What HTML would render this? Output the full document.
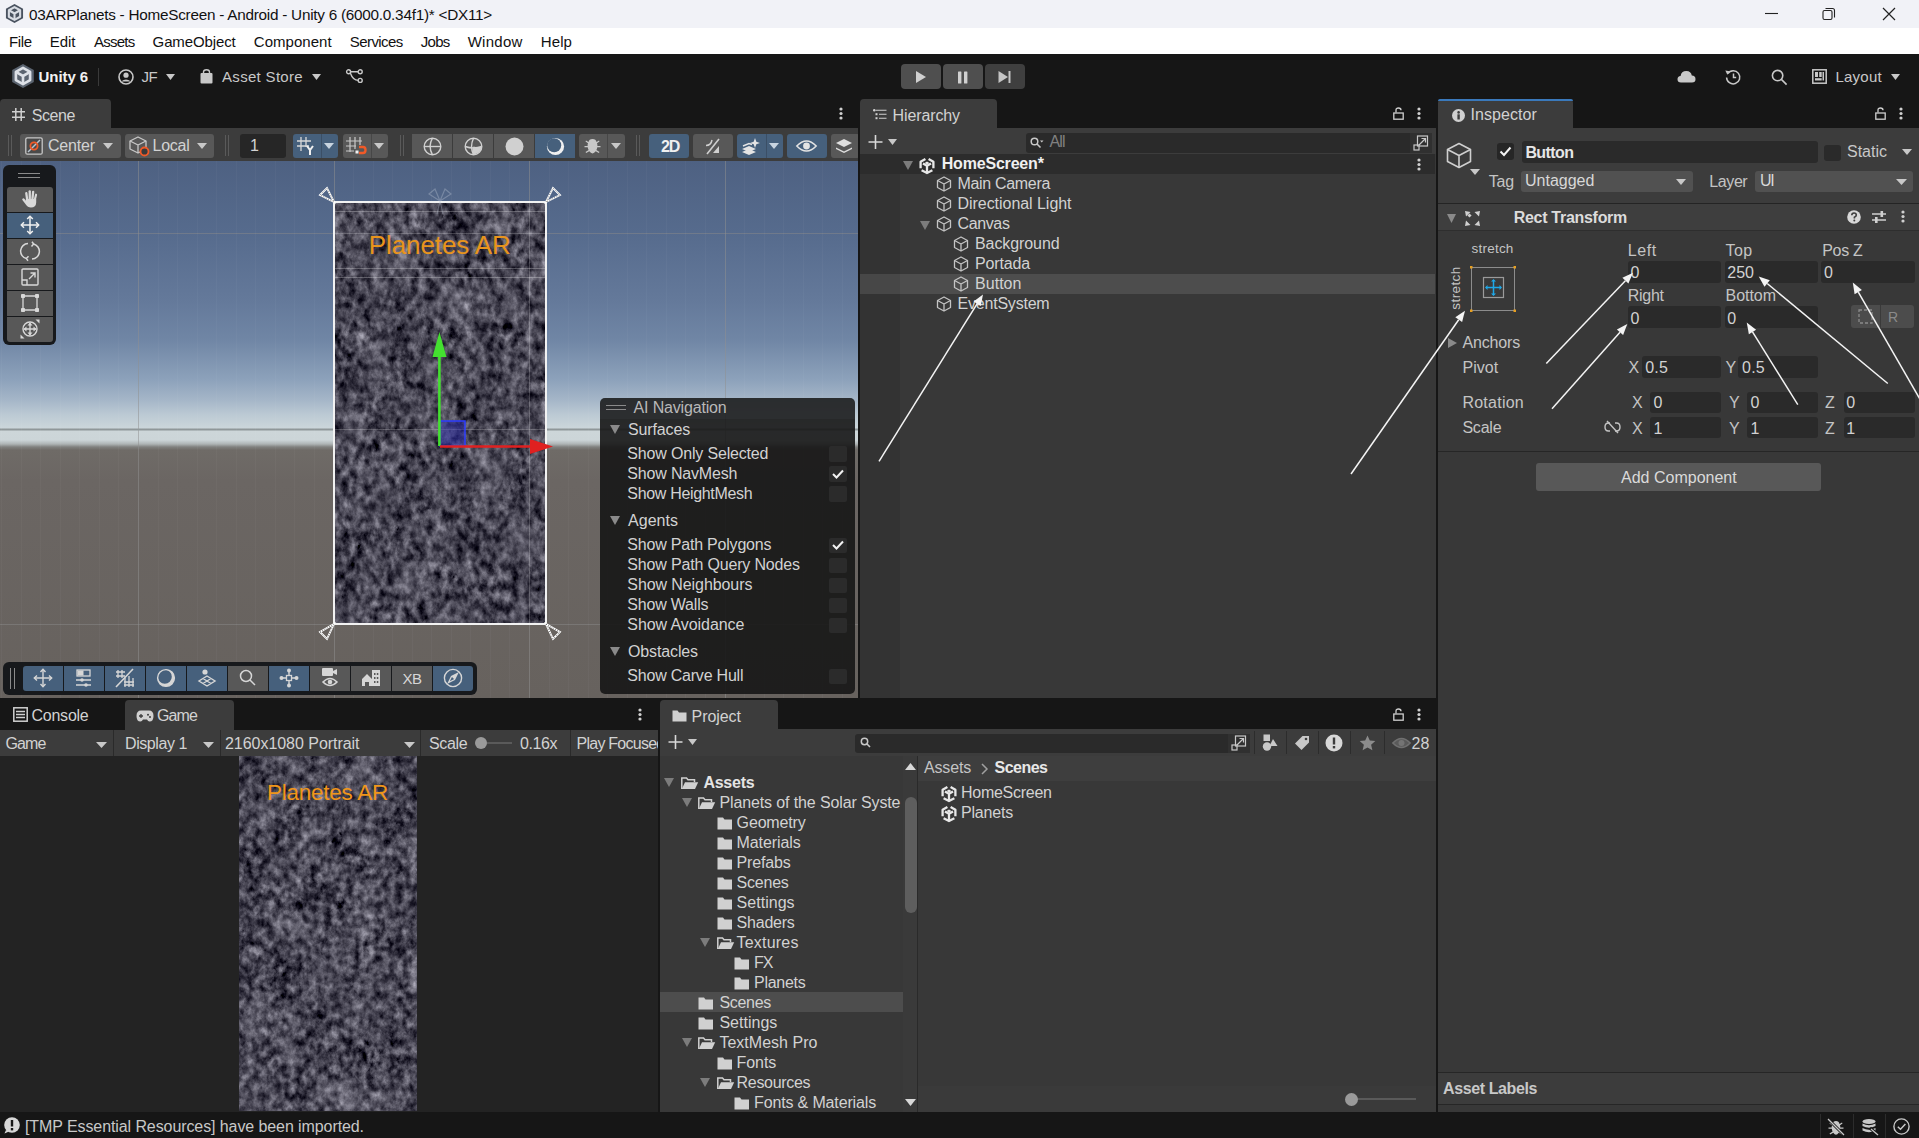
<!DOCTYPE html>
<html><head><meta charset="utf-8">
<style>
*{box-sizing:border-box;margin:0;padding:0}
html,body{width:1919px;height:1138px;overflow:hidden;background:#161616;font-family:"Liberation Sans",sans-serif;position:relative}
.a{position:absolute}
.t{position:absolute;white-space:pre;line-height:1}
svg.a{overflow:visible}
</style></head><body>
<div class="a" style="left:0px;top:0px;width:1919px;height:28px;background:#f1f2f7;"></div>
<div class="a" style="left:0px;top:28px;width:1919px;height:26px;background:#ffffff;"></div>
<div class="a" style="left:0px;top:54px;width:1919px;height:45px;background:#161616;"></div>
<svg class="a" style="left:5px;top:4px;" width="19" height="19" viewBox="0 0 19 19"><path d="M9.5 0 L18.05 4.75 L18.05 14.25 L9.5 19 L0.9500000000000001 14.25 L0.9500000000000001 4.75 Z" fill="#4a5360"/><g fill="none" stroke="#d8dce3" stroke-width="2.09" stroke-linejoin="round"><path d="M9.5 3.039999999999999 L15.1202 6.27 L15.1202 12.73 L9.5 15.96 L3.8797999999999995 12.73 L3.8797999999999995 6.27 Z"/><path d="M9.5 9.5 L9.5 15.96 M9.5 9.5 L15.1202 6.27 M9.5 9.5 L3.8797999999999995 6.27"/></g></svg>
<div class="t" style="left:29.00px;top:7.05px;font-size:15.3px;color:#111111;letter-spacing:-0.247px;">03ARPlanets - HomeScreen - Android - Unity 6 (6000.0.34f1)* &lt;DX11&gt;</div>
<svg class="a" style="left:1765px;top:8px;" width="14" height="12" viewBox="0 0 14 12"><path d="M0 5.5 H13" stroke="#222" stroke-width="1.1"/></svg>
<svg class="a" style="left:1822px;top:7px;" width="14" height="14" viewBox="0 0 14 14"><rect x="1" y="3.5" width="9" height="9" rx="1.5" fill="none" stroke="#222" stroke-width="1.1"/><path d="M3.5 1.5 H10.5 Q12.5 1.5 12.5 3.5 V10.5" fill="none" stroke="#222" stroke-width="1.1"/></svg>
<svg class="a" style="left:1882px;top:7px;" width="14" height="14" viewBox="0 0 14 14"><path d="M1 1 L13 13 M13 1 L1 13" stroke="#222" stroke-width="1.2"/></svg>
<div class="t" style="left:9.00px;top:34.30px;font-size:15px;color:#111111;letter-spacing:-0.368px;">File</div>
<div class="t" style="left:49.80px;top:34.30px;font-size:15px;color:#111111;letter-spacing:-0.040px;">Edit</div>
<div class="t" style="left:94.00px;top:34.30px;font-size:15px;color:#111111;letter-spacing:-0.769px;">Assets</div>
<div class="t" style="left:152.60px;top:34.30px;font-size:15px;color:#111111;letter-spacing:-0.120px;">GameObject</div>
<div class="t" style="left:253.80px;top:34.30px;font-size:15px;color:#111111;letter-spacing:0.037px;">Component</div>
<div class="t" style="left:349.80px;top:34.30px;font-size:15px;color:#111111;letter-spacing:-0.579px;">Services</div>
<div class="t" style="left:420.80px;top:34.30px;font-size:15px;color:#111111;letter-spacing:-0.747px;">Jobs</div>
<div class="t" style="left:467.70px;top:34.30px;font-size:15px;color:#111111;letter-spacing:0.273px;">Window</div>
<div class="t" style="left:540.80px;top:34.30px;font-size:15px;color:#111111;letter-spacing:0.085px;">Help</div>
<svg class="a" style="left:11px;top:64px;" width="24" height="24" viewBox="0 0 24 24"><path d="M12.0 0 L22.799999999999997 6.0 L22.799999999999997 18.0 L12.0 24 L1.2000000000000002 18.0 L1.2000000000000002 6.0 Z" fill="#5b6470"/><g fill="none" stroke="#dde1e7" stroke-width="2.64" stroke-linejoin="round"><path d="M12.0 3.84 L19.0992 7.92 L19.0992 16.08 L12.0 20.16 L4.9008 16.08 L4.9008 7.92 Z"/><path d="M12.0 12.0 L12.0 20.16 M12.0 12.0 L19.0992 7.92 M12.0 12.0 L4.9008 7.92"/></g></svg>
<div class="t" style="left:38.60px;top:69.30px;font-size:15px;color:#f2f2f2;letter-spacing:-0.074px;font-weight:700;">Unity 6</div>
<div class="a" style="left:98px;top:68px;width:1px;height:18px;background:#3a3a3a;"></div>
<svg class="a" style="left:118px;top:69px;" width="16" height="16" viewBox="0 0 16 16"><circle cx="8" cy="8" r="7" fill="none" stroke="#c8c8c8" stroke-width="1.6"/><circle cx="8" cy="6.2" r="2.6" fill="#c8c8c8"/><path d="M3.2 12.6 Q8 8.4 12.8 12.6" fill="#c8c8c8"/></svg>
<div class="t" style="left:141.60px;top:69.30px;font-size:15px;color:#c8c8c8;letter-spacing:-0.586px;">JF</div>
<svg class="a" style="left:166px;top:74px;" width="9" height="6" viewBox="0 0 9 6"><path d="M0 0 H9 L4.5 6 Z" fill="#c8c8c8"/></svg>
<svg class="a" style="left:199.5px;top:69px;" width="13" height="15" viewBox="0 0 13 15"><path d="M3.5 4.5 V3 Q3.5 0.8 6.5 0.8 Q9.5 0.8 9.5 3 V4.5" fill="none" stroke="#c8c8c8" stroke-width="1.4"/><rect x="0.5" y="4" width="12" height="10.5" rx="1" fill="#c8c8c8"/></svg>
<div class="t" style="left:222.00px;top:69.30px;font-size:15px;color:#c8c8c8;letter-spacing:0.314px;">Asset Store</div>
<svg class="a" style="left:312px;top:74px;" width="9" height="6" viewBox="0 0 9 6"><path d="M0 0 H9 L4.5 6 Z" fill="#c8c8c8"/></svg>
<svg class="a" style="left:346px;top:69px;" width="17" height="14" viewBox="0 0 17 14"><g fill="none" stroke="#c8c8c8" stroke-width="1.4"><circle cx="2.6" cy="2.8" r="2"/><circle cx="14.2" cy="2.8" r="2"/><circle cx="14.2" cy="11.4" r="2"/><path d="M4.6 2.8 H12.2 M4.3 4 Q7 11.4 12.2 11.4"/></g></svg>
<div class="a" style="left:901px;top:64px;width:40px;height:25px;background:#4f4f4f;border-radius:4px"></div>
<div class="a" style="left:943px;top:64px;width:40px;height:25px;background:#4f4f4f;border-radius:4px"></div>
<div class="a" style="left:985px;top:64px;width:40px;height:25px;background:#3f3f3f;border-radius:4px"></div>
<svg class="a" style="left:915px;top:70px;" width="12" height="14" viewBox="0 0 12 14"><path d="M1 1 L11 7 L1 13 Z" fill="#d0d0d0"/></svg>
<svg class="a" style="left:957px;top:71px;" width="12" height="13" viewBox="0 0 12 13"><rect x="1" y="0.5" width="3.4" height="12" rx="0.6" fill="#d0d0d0"/><rect x="7" y="0.5" width="3.4" height="12" rx="0.6" fill="#d0d0d0"/></svg>
<svg class="a" style="left:998px;top:70px;" width="14" height="14" viewBox="0 0 14 14"><path d="M0.5 1 L10 7 L0.5 13 Z" fill="#c4c4c4"/><rect x="10.5" y="1" width="2" height="12" fill="#c4c4c4"/></svg>
<svg class="a" style="left:1677px;top:70px;" width="19" height="13" viewBox="0 0 19 13"><path d="M4 12.5 Q0.5 12.5 0.5 9.3 Q0.5 6.3 3.6 6 Q4.2 1 9.4 1 Q14 1 14.8 5.6 Q18.5 5.8 18.5 9.2 Q18.5 12.5 15 12.5 Z" fill="#c8c8c8"/></svg>
<svg class="a" style="left:1725px;top:69px;" width="17" height="16" viewBox="0 0 17 16"><g fill="none" stroke="#c8c8c8" stroke-width="1.5"><path d="M2.8 4.5 A6.6 6.6 0 1 1 1.6 8.4"/><path d="M8.5 4.6 V8.6 H11.2"/></g><path d="M0.3 1.6 L4.6 2.2 L2.4 5.8 Z" fill="#c8c8c8"/></svg>
<svg class="a" style="left:1771px;top:69px;" width="17" height="17" viewBox="0 0 17 17"><g fill="none" stroke="#c8c8c8" stroke-width="1.6"><circle cx="6.6" cy="6.6" r="5.2"/><path d="M10.4 10.4 L15.6 15.6"/></g></svg>
<svg class="a" style="left:1812px;top:69px;" width="15" height="15" viewBox="0 0 15 15"><g fill="none" stroke="#c8c8c8" stroke-width="1.5"><rect x="0.8" y="0.8" width="13.4" height="13.4"/></g><rect x="3" y="3" width="3" height="5" fill="#c8c8c8"/><rect x="7.2" y="3" width="2.5" height="5" fill="#c8c8c8"/><rect x="10.5" y="3" width="1.5" height="8.5" fill="#c8c8c8"/><rect x="3" y="9.2" width="6.7" height="2.3" fill="#c8c8c8"/></svg>
<div class="t" style="left:1835.40px;top:69.30px;font-size:15px;color:#c8c8c8;letter-spacing:0.259px;">Layout</div>
<svg class="a" style="left:1891px;top:74px;" width="9" height="6" viewBox="0 0 9 6"><path d="M0 0 H9 L4.5 6 Z" fill="#c8c8c8"/></svg>
<div class="a" style="left:0px;top:99px;width:111px;height:29px;background:#3c3c3c;border-radius:4px 4px 0 0"></div>
<svg class="a" style="left:12px;top:108px;" width="13" height="13" viewBox="0 0 13 13"><g stroke="#d0d0d0" stroke-width="1.5"><path d="M3.8 0 V13 M9.2 0 V13 M0 3.8 H13 M0 9.2 H13"/></g></svg>
<div class="t" style="left:31.70px;top:107.56px;font-size:16px;color:#d2d2d2;letter-spacing:-0.415px;">Scene</div>
<svg class="a" style="left:839px;top:107px;" width="4" height="13" viewBox="0 0 4 13"><circle cx="2" cy="2" r="1.6" fill="#d0d0d0"/><circle cx="2" cy="6.5" r="1.6" fill="#d0d0d0"/><circle cx="2" cy="11" r="1.6" fill="#d0d0d0"/></svg>
<div class="a" style="left:0px;top:128px;width:858px;height:33px;background:#3c3c3c;"></div>
<div class="a" style="left:8px;top:135px;width:1px;height:21px;background:#5a5a5a;"></div>
<div class="a" style="left:11px;top:135px;width:1px;height:21px;background:#5a5a5a;"></div>
<div class="a" style="left:225px;top:135px;width:1px;height:21px;background:#5a5a5a;"></div>
<div class="a" style="left:228px;top:135px;width:1px;height:21px;background:#5a5a5a;"></div>
<div class="a" style="left:400px;top:135px;width:1px;height:21px;background:#5a5a5a;"></div>
<div class="a" style="left:403px;top:135px;width:1px;height:21px;background:#5a5a5a;"></div>
<div class="a" style="left:636px;top:135px;width:1px;height:21px;background:#5a5a5a;"></div>
<div class="a" style="left:639px;top:135px;width:1px;height:21px;background:#5a5a5a;"></div>
<div class="a" style="left:20px;top:134px;width:101px;height:24px;background:#585858;border-radius:3px"></div>
<svg class="a" style="left:25px;top:137px;" width="18" height="18" viewBox="0 0 18 18"><rect x="0.8" y="0.8" width="16.4" height="16.4" rx="1.5" fill="#4a4a4a" stroke="#c8c8c8" stroke-width="1.3"/><path d="M3 15 L15 3" stroke="#b8c4d0" stroke-width="1.4"/><circle cx="9" cy="9" r="3.6" fill="none" stroke="#f05a28" stroke-width="1.8"/></svg>
<div class="t" style="left:47.90px;top:138.26px;font-size:16px;color:#d2d2d2;letter-spacing:-0.172px;">Center</div>
<svg class="a" style="left:103px;top:143px;" width="10" height="6" viewBox="0 0 10 6"><path d="M0 0 H10 L5.0 6 Z" fill="#c8c8c8"/></svg>
<div class="a" style="left:125px;top:134px;width:89px;height:24px;background:#585858;border-radius:3px"></div>
<svg class="a" style="left:129px;top:136px;" width="21" height="21" viewBox="0 0 21 21"><g fill="none" stroke="#c8c8c8" stroke-width="1.3" stroke-linejoin="round"><path d="M9 1 L17 5 L17 13 L9 17 L1 13 L1 5 Z"/><path d="M1 5 L9 9 L17 5 M9 9 V17"/></g><circle cx="15.5" cy="15.5" r="4" fill="#3a3a3a" stroke="#f05a28" stroke-width="1.8"/></svg>
<div class="t" style="left:152.50px;top:138.26px;font-size:16px;color:#d2d2d2;letter-spacing:-0.250px;">Local</div>
<svg class="a" style="left:197px;top:143px;" width="10" height="6" viewBox="0 0 10 6"><path d="M0 0 H10 L5.0 6 Z" fill="#c8c8c8"/></svg>
<div class="a" style="left:240px;top:134px;width:46px;height:24px;background:#262626;border-radius:3px"></div>
<div class="t" style="left:250.00px;top:138.26px;font-size:16px;color:#d2d2d2;letter-spacing:0.000px;">1</div>
<div class="a" style="left:292.6px;top:134px;width:45.39999999999998px;height:24px;background:#46607c;border-radius:3px"></div>
<div class="a" style="left:320.6px;top:134px;width:1px;height:24px;background:#3b4f66;"></div>
<svg class="a" style="left:297px;top:137px;" width="19" height="19" viewBox="0 0 19 19"><g stroke="#d8d8d8" stroke-width="1.3"><path d="M4 0 V14 M9 0 V10 M0 4 H14 M0 9 H12"/></g><path d="M10 9 L13 13 L16 9 M13 13 V18" fill="none" stroke="#f0f0f0" stroke-width="2"/></svg>
<svg class="a" style="left:324px;top:143px;" width="10" height="6" viewBox="0 0 10 6"><path d="M0 0 H10 L5.0 6 Z" fill="#c8d4e0"/></svg>
<div class="a" style="left:342.6px;top:134px;width:45.39999999999998px;height:24px;background:#585858;border-radius:3px"></div>
<div class="a" style="left:370.6px;top:134px;width:1px;height:24px;background:#474747;"></div>
<svg class="a" style="left:346px;top:137px;" width="20" height="19" viewBox="0 0 20 19"><g stroke="#c8c8c8" stroke-width="1.2"><path d="M4 0 V15 M9 0 V12 M14 0 V8 M0 4 H16 M0 9 H10 M0 14 H8"/></g><path d="M13 10 H17 Q19.5 10 19.5 13 Q19.5 16 17 16 H13" fill="none" stroke="#f05a28" stroke-width="2.4"/><rect x="9.5" y="13.5" width="3" height="3" fill="#f0f0f0"/></svg>
<svg class="a" style="left:374px;top:143px;" width="10" height="6" viewBox="0 0 10 6"><path d="M0 0 H10 L5.0 6 Z" fill="#c8c8c8"/></svg>
<div class="a" style="left:412px;top:134px;width:40px;height:24px;background:#585858;border-radius:0px"></div>
<div class="a" style="left:453px;top:134px;width:40px;height:24px;background:#585858;border-radius:0px"></div>
<div class="a" style="left:494px;top:134px;width:40px;height:24px;background:#585858;border-radius:0px"></div>
<div class="a" style="left:535px;top:134px;width:40px;height:24px;background:#46607c;border-radius:0px"></div>
<div class="a" style="left:412px;top:134px;width:3px;height:24px;background:#585858;border-radius:3px 0 0 3px"></div>
<svg class="a" style="left:423px;top:137px;" width="19" height="19" viewBox="0 0 19 19"><g fill="none" stroke="#d0d0d0" stroke-width="1.4"><circle cx="9.5" cy="9.5" r="8.3"/><path d="M1.2 9.5 H17.8"/><path d="M9.5 1.2 Q4.6 9.5 9.5 17.8"/></g></svg>
<svg class="a" style="left:464px;top:137px;" width="19" height="19" viewBox="0 0 19 19"><g fill="none" stroke="#d0d0d0" stroke-width="1.4"><circle cx="9.5" cy="9.5" r="8.3"/><path d="M1.2 9.5 Q9.5 12.5 17.8 9.5"/><path d="M9.5 1.2 Q5.6 9.5 9.5 17.8"/></g><path d="M9.5 9.5 Q14 10.6 17.8 9.5 Q17 16 9.5 17.8 Q7 14 9.5 9.5 Z" fill="#d0d0d0"/></svg>
<svg class="a" style="left:505px;top:137px;" width="19" height="19" viewBox="0 0 19 19"><circle cx="9.5" cy="9.5" r="9" fill="#d0d0d0"/></svg>
<svg class="a" style="left:546px;top:137px;" width="19" height="19" viewBox="0 0 19 19"><circle cx="9.5" cy="9.5" r="8.6" fill="#f0f0f0"/><circle cx="8.2" cy="8.2" r="7" fill="#46607c"/></svg>
<div class="a" style="left:578.6px;top:134px;width:46.39999999999998px;height:24px;background:#585858;border-radius:3px"></div>
<div class="a" style="left:607px;top:134px;width:1px;height:24px;background:#474747;"></div>
<svg class="a" style="left:583px;top:137px;" width="19" height="18" viewBox="0 0 19 18"><path d="M9.5 2 Q6 2 5.5 5 L3 3.5 L2.5 4.5 L5 6.3 Q4.5 7.5 4.6 9 L1.5 9 V10.2 L4.7 10.2 Q5 12 5.6 13 L2.5 15 L3.2 16 L6.3 14.2 Q7.8 16.2 9.5 16.4 Q11.2 16.2 12.7 14.2 L15.8 16 L16.5 15 L13.4 13 Q14 12 14.3 10.2 L17.5 10.2 V9 L14.4 9 Q14.5 7.5 14 6.3 L16.5 4.5 L16 3.5 L13.5 5 Q13 2 9.5 2 Z" fill="#c8c8c8"/></svg>
<svg class="a" style="left:611px;top:143px;" width="10" height="6" viewBox="0 0 10 6"><path d="M0 0 H10 L5.0 6 Z" fill="#c8c8c8"/></svg>
<div class="a" style="left:649px;top:134px;width:40px;height:24px;background:#46607c;border-radius:3px"></div>
<div class="t" style="left:661.00px;top:138.56px;font-size:16px;color:#f0f0f0;letter-spacing:-1.227px;font-weight:700;">2D</div>
<div class="a" style="left:693px;top:134px;width:40px;height:24px;background:#585858;border-radius:3px"></div>
<svg class="a" style="left:704px;top:137px;" width="18" height="19" viewBox="0 0 18 19"><path d="M3 17 L15 2" stroke="#d0d0d0" stroke-width="1.6"/><path d="M2 8.5 Q7 8.5 8 3" fill="none" stroke="#d0d0d0" stroke-width="1.5"/><path d="M9 16 L15 9 V16 Z" fill="#d0d0d0"/></svg>
<div class="a" style="left:737px;top:134px;width:46px;height:24px;background:#46607c;border-radius:3px"></div>
<div class="a" style="left:765.7px;top:134px;width:1px;height:24px;background:#3b4f66;"></div>
<svg class="a" style="left:741px;top:137px;" width="20" height="19" viewBox="0 0 20 19"><path d="M1 12 L8 9 L15 12 L8 15 Z M1 15 L8 12 L15 15 L8 18 Z" fill="#e4e4e4"/><path d="M2 9 L8 6.5 L11 7.5" fill="none" stroke="#e4e4e4" stroke-width="1.5"/><path d="M14 1 L15.3 4.7 L19 6 L15.3 7.3 L14 11 L12.7 7.3 L9 6 L12.7 4.7 Z" fill="#e4e4e4"/></svg>
<svg class="a" style="left:769px;top:143px;" width="10" height="6" viewBox="0 0 10 6"><path d="M0 0 H10 L5.0 6 Z" fill="#c8d4e0"/></svg>
<div class="a" style="left:786.6px;top:134px;width:40.39999999999998px;height:24px;background:#46607c;border-radius:3px"></div>
<svg class="a" style="left:796px;top:139px;" width="21" height="14" viewBox="0 0 21 14"><path d="M0.8 7 Q10.5 -3 20.2 7 Q10.5 17 0.8 7 Z" fill="none" stroke="#e4e4e4" stroke-width="1.5"/><circle cx="10.5" cy="7" r="3.4" fill="#e4e4e4"/></svg>
<div class="a" style="left:831px;top:134px;width:29px;height:24px;background:#585858;border-radius:3px"></div>
<svg class="a" style="left:835px;top:138px;" width="18" height="16" viewBox="0 0 18 16"><path d="M9 1 L17 5 L9 9 L1 5 Z M1 9.5 L9 13.5 L17 9.5 L17 11 L9 15 L1 11 Z" fill="#e0e0e0"/></svg>
<div class="a" style="left:858px;top:128px;width:2px;height:570px;background:#161616;"></div>
<div class="a" style="left:0;top:161px;width:858px;height:537px;overflow:hidden;background:linear-gradient(to bottom,#4e6182 0px,#566b8d 72px,#64799a 139px,#7086a5 179px,#8da2bb 219px,#a5b6c8 239px,#bccad4 254px,#cad5da 266px,#cdd6d9 270px,#ccd5d8 279px,#aeb4b5 283px,#80807e 286px,#6f6b67 289px,#6b6663 320px,#67625e 537px)">
<svg class="a" style="left:0;top:0" width="858" height="537"><g stroke="#8a8a8a" stroke-opacity="0.5" stroke-width="1"><path d="M138.5 0 V537 M529.5 0 V537 M725.5 0 V537 M334.5 0 V537"/><path d="M0 72.5 H858 M0 463.5 H858"/></g><path d="M0 268.5 H858" stroke="#8f9799" stroke-width="2"/><g stroke="#ffffff" stroke-opacity="0.03" stroke-width="1"><path d="M1.5 0 V537"/><path d="M21.5 0 V537"/><path d="M40.5 0 V537"/><path d="M60.5 0 V537"/><path d="M79.5 0 V537"/><path d="M99.5 0 V537"/><path d="M118.5 0 V537"/><path d="M138.5 0 V537"/><path d="M158.5 0 V537"/><path d="M177.5 0 V537"/><path d="M197.5 0 V537"/><path d="M216.5 0 V537"/><path d="M236.5 0 V537"/><path d="M255.5 0 V537"/><path d="M275.5 0 V537"/><path d="M294.5 0 V537"/><path d="M314.5 0 V537"/><path d="M334.5 0 V537"/><path d="M353.5 0 V537"/><path d="M373.5 0 V537"/><path d="M392.5 0 V537"/><path d="M412.5 0 V537"/><path d="M431.5 0 V537"/><path d="M451.5 0 V537"/><path d="M470.5 0 V537"/><path d="M490.5 0 V537"/><path d="M509.5 0 V537"/><path d="M529.5 0 V537"/><path d="M549.5 0 V537"/><path d="M568.5 0 V537"/><path d="M588.5 0 V537"/><path d="M607.5 0 V537"/><path d="M627.5 0 V537"/><path d="M646.5 0 V537"/><path d="M666.5 0 V537"/><path d="M685.5 0 V537"/><path d="M705.5 0 V537"/><path d="M725.5 0 V537"/><path d="M744.5 0 V537"/><path d="M764.5 0 V537"/><path d="M783.5 0 V537"/><path d="M803.5 0 V537"/><path d="M822.5 0 V537"/><path d="M842.5 0 V537"/></g></svg>
</div>
<svg class="a" style="left:334px;top:202px;" width="212" height="422" viewBox="0 0 212 422"><defs><filter id="gr1" x="0" y="0" width="100%" height="100%" color-interpolation-filters="sRGB"><feTurbulence type="fractalNoise" baseFrequency="0.13 0.1" numOctaves="4" seed="7" result="hi"/><feTurbulence type="fractalNoise" baseFrequency="0.035 0.025" numOctaves="2" seed="12" result="lo"/><feComposite in="hi" in2="lo" operator="arithmetic" k1="0" k2="0.85" k3="0.35" k4="-0.1"/><feColorMatrix type="matrix" values="0.85 0 0 0 -0.05  0.85 0 0 0 -0.058  0.85 0 0 0 -0.005  0 0 0 0 1"/></filter></defs><rect width="212" height="422" fill="#5a5a64" filter="url(#gr1)"/></svg>
<svg class="a" style="left:334px;top:202px;" width="212" height="422" viewBox="0 0 212 422"><g stroke="#ffffff" stroke-opacity="0.25" stroke-width="1"><path d="M0 9.5 H212 M0 66.5 H212 M0 75.5 H212"/></g><g stroke="#ffffff" stroke-opacity="0.2" stroke-width="1"><path d="M195.5 0 V422 M0 31.5 H212 M0 227.5 H212"/></g></svg>
<div class="t" style="left:368.75px;top:232.39px;font-size:26px;color:#e8941c;letter-spacing:-0.099px;">Planetes AR</div>
<svg class="a" style="left:333px;top:201px;" width="214" height="424" viewBox="0 0 214 424"><rect x="1" y="1" width="212" height="422" fill="none" stroke="#f2f2f2" stroke-width="2"/></svg>
<svg class="a" style="left:0px;top:0px;" width="1" height="1" viewBox="0 0 1 1"><path d="M320 195 L327 188 L334 202 Z" fill="none" stroke="#ffffff" stroke-width="1.8"/><path d="M320 195 L327 188 L334 202 Z" fill="none" stroke="#101010" stroke-opacity="0.7" stroke-width="0.8" stroke-dasharray="1 1.6"/></svg>
<svg class="a" style="left:0px;top:0px;" width="1" height="1" viewBox="0 0 1 1"><path d="M546 202 L553 188 L560 195 Z" fill="none" stroke="#ffffff" stroke-width="1.8"/><path d="M546 202 L553 188 L560 195 Z" fill="none" stroke="#101010" stroke-opacity="0.7" stroke-width="0.8" stroke-dasharray="1 1.6"/></svg>
<svg class="a" style="left:0px;top:0px;" width="1" height="1" viewBox="0 0 1 1"><path d="M320 632 L327 639 L334 624 Z" fill="none" stroke="#ffffff" stroke-width="1.8"/><path d="M320 632 L327 639 L334 624 Z" fill="none" stroke="#101010" stroke-opacity="0.7" stroke-width="0.8" stroke-dasharray="1 1.6"/></svg>
<svg class="a" style="left:0px;top:0px;" width="1" height="1" viewBox="0 0 1 1"><path d="M546 624 L553 639 L560 632 Z" fill="none" stroke="#ffffff" stroke-width="1.8"/><path d="M546 624 L553 639 L560 632 Z" fill="none" stroke="#101010" stroke-opacity="0.7" stroke-width="0.8" stroke-dasharray="1 1.6"/></svg>
<svg class="a" style="left:425px;top:186px;" width="30" height="30" viewBox="0 0 30 30"><g fill="none" stroke="#c0c8d8" stroke-opacity="0.35" stroke-width="1.2"><path d="M15 15 L4 8 L10 3 Z M15 15 L26 8 L20 3 Z M15 15 L12 28 M15 15 L18 28"/></g></svg>
<svg class="a" style="left:430px;top:330px;" width="125" height="126" viewBox="0 0 125 126"><rect x="10" y="91" width="25" height="25" fill="#3030c0" fill-opacity="0.45" stroke="#2c3cff" stroke-width="1.5"/><path d="M9.4 26 V116" stroke="#44e030" stroke-width="2.6"/><path d="M2.5 27 L9.4 2 L16.5 27 Z" fill="#44e030"/><path d="M10 116.5 H101" stroke="#e02020" stroke-width="2.6"/><path d="M100 109 L123 116.5 L100 124 Z" fill="#e02020"/></svg>
<div class="a" style="left:3px;top:165px;width:53px;height:180px;background:#17191c;border-radius:6px"></div>
<div class="a" style="left:18px;top:173px;width:22px;height:1.3px;background:#8a8a8a;"></div>
<div class="a" style="left:18px;top:177px;width:22px;height:1.3px;background:#8a8a8a;"></div>
<div class="a" style="left:7px;top:187px;width:46px;height:25px;background:#585858;border-radius:3px 3px 0 0"></div>
<div class="a" style="left:7px;top:213px;width:46px;height:25px;background:#46607c;"></div>
<div class="a" style="left:7px;top:239px;width:46px;height:25px;background:#585858;"></div>
<div class="a" style="left:7px;top:265px;width:46px;height:25px;background:#585858;"></div>
<div class="a" style="left:7px;top:291px;width:46px;height:25px;background:#585858;"></div>
<div class="a" style="left:7px;top:317px;width:46px;height:25px;background:#585858;border-radius:0 0 3px 3px"></div>
<svg class="a" style="left:20px;top:189px;" width="20" height="20" viewBox="0 0 20 20"><g fill="#d8d8d8"><rect x="5.6" y="3" width="2.3" height="9" rx="1.15" transform="rotate(-8 6.7 7.5)"/><rect x="8.6" y="1.2" width="2.3" height="10" rx="1.15"/><rect x="11.6" y="1.8" width="2.3" height="10" rx="1.15" transform="rotate(6 12.7 6.8)"/><rect x="14.3" y="4.5" width="2.1" height="8" rx="1.05" transform="rotate(14 15.3 8.5)"/><path d="M5.8 10 H16.2 V13.5 Q16 18.6 11 18.6 Q7.6 18.6 5.8 15.6 L2.4 11 Q1.8 9.9 2.8 9.4 Q3.8 8.9 4.6 10 L6 11.8 Z"/></g></svg>
<svg class="a" style="left:20px;top:215px;" width="20" height="20" viewBox="0 0 20 20"><g fill="none" stroke="#f0f0f0" stroke-width="1.5"><path d="M10 1.5 V18.5 M1.5 10 H18.5"/><path d="M7.2 4 L10 1.3 L12.8 4 M7.2 16 L10 18.7 L12.8 16 M4 7.2 L1.3 10 L4 12.8 M16 7.2 L18.7 10 L16 12.8"/></g></svg>
<svg class="a" style="left:20px;top:241px;" width="20" height="21" viewBox="0 0 20 21"><g fill="none" stroke="#d8d8d8" stroke-width="1.5"><path d="M8 2.6 A7.6 7.6 0 0 0 6.5 17.6"/><path d="M12 18 A7.6 7.6 0 0 0 13.5 3"/><path d="M12 0.8 L13.6 3 L11.5 5.4 M8 19.8 L6.4 17.6 L8.5 15.2"/></g></svg>
<svg class="a" style="left:21px;top:267px;" width="18" height="20" viewBox="0 0 18 20"><g fill="none" stroke="#d8d8d8" stroke-width="1.4"><rect x="1" y="2" width="16" height="16" rx="1"/><path d="M1 13 H6 V18"/><path d="M8 12 L14 6 M9.5 6 H14 V10.5"/></g></svg>
<svg class="a" style="left:20px;top:293px;" width="20" height="20" viewBox="0 0 20 20"><g fill="none" stroke="#d8d8d8" stroke-width="1.3"><path d="M4 3 H16 M4 17 H16 M3 4 V16 M17 4 V16"/></g><g fill="#d8d8d8"><rect x="1" y="1" width="4" height="4" rx="0.8"/><rect x="15" y="1" width="4" height="4" rx="0.8"/><rect x="1" y="15" width="4" height="4" rx="0.8"/><rect x="15" y="15" width="4" height="4" rx="0.8"/></g></svg>
<svg class="a" style="left:20px;top:319px;" width="20" height="20" viewBox="0 0 20 20"><g fill="none" stroke="#d8d8d8" stroke-width="1.4"><circle cx="10" cy="10" r="7"/><path d="M10 4 V16 M4 10 H16"/></g><g fill="#d8d8d8"><path d="M7.5 6.5 L10 3.5 L12.5 6.5 Z M7.5 13.5 L10 16.5 L12.5 13.5 Z M6.5 7.5 L3.5 10 L6.5 12.5 Z M13.5 7.5 L16.5 10 L13.5 12.5 Z"/><path d="M15.5 0.5 H19.5 V4.5 Z M0.5 19.5 V15.5 L4.5 19.5 Z"/></g></svg>
<div class="a" style="left:3px;top:662px;width:474px;height:33px;background:#17191c;border-radius:6px"></div>
<div class="a" style="left:10px;top:668px;width:1.3px;height:21px;background:#8a8a8a;"></div>
<div class="a" style="left:13.5px;top:668px;width:1.3px;height:21px;background:#8a8a8a;"></div>
<div class="a" style="left:23px;top:666px;width:40px;height:25px;background:#46607c;border-radius:3px 0 0 3px"></div>
<div class="a" style="left:64px;top:666px;width:40px;height:25px;background:#46607c;"></div>
<div class="a" style="left:105px;top:666px;width:40px;height:25px;background:#46607c;"></div>
<div class="a" style="left:146px;top:666px;width:40px;height:25px;background:#46607c;"></div>
<div class="a" style="left:187px;top:666px;width:40px;height:25px;background:#46607c;"></div>
<div class="a" style="left:228px;top:666px;width:40px;height:25px;background:#585858;"></div>
<div class="a" style="left:269px;top:666px;width:40px;height:25px;background:#46607c;"></div>
<div class="a" style="left:310px;top:666px;width:40px;height:25px;background:#585858;"></div>
<div class="a" style="left:351px;top:666px;width:40px;height:25px;background:#585858;"></div>
<div class="a" style="left:392px;top:666px;width:40px;height:25px;background:#585858;"></div>
<div class="a" style="left:433px;top:666px;width:40px;height:25px;background:#46607c;border-radius:0 3px 3px 0"></div>
<svg class="a" style="left:33px;top:668px;" width="20" height="20" viewBox="0 0 20 20"><g fill="none" stroke="#d6d6d6" stroke-width="1.4"><path d="M10 1.5 V18.5 M1.5 10 H18.5"/><path d="M7.5 4 L10 1.3 L12.5 4 M7.5 16 L10 18.7 L12.5 16 M4 7.5 L1.3 10 L4 12.5 M16 7.5 L18.7 10 L16 12.5"/></g></svg>
<svg class="a" style="left:74px;top:669px;" width="20" height="20" viewBox="0 0 20 20"><rect x="3" y="1" width="13" height="6" fill="none" stroke="#d6d6d6" stroke-width="1.3"/><rect x="3.5" y="1.5" width="6" height="5" fill="#d6d6d6"/><g stroke="#d6d6d6" stroke-width="1.3"><path d="M2 11 H17 M2 16 H17"/></g><circle cx="8" cy="11" r="1.8" fill="#d6d6d6"/><circle cx="12" cy="16" r="1.8" fill="#d6d6d6"/></svg>
<svg class="a" style="left:115px;top:668px;" width="20" height="20" viewBox="0 0 20 20"><g stroke="#d6d6d6" stroke-width="1.3"><path d="M3 2 V10 M7 2 V10 M1 4 H10 M1 8 H10 M10 10 V19 M14 8 V19 M18 10 V19 M9 14 H19 M9 17 H19"/><path d="M1 19 L18 1" stroke-width="1.6"/></g></svg>
<svg class="a" style="left:156px;top:668px;" width="20" height="20" viewBox="0 0 20 20"><circle cx="10" cy="10" r="8.4" fill="none" stroke="#d6d6d6" stroke-width="1.4"/><path fill-rule="evenodd" d="M1.6 10 A8.4 8.4 0 1 0 18.4 10 A8.4 8.4 0 1 0 1.6 10 Z M1.8 8.8 A7 7 0 1 0 15.8 8.8 A7 7 0 1 0 1.8 8.8 Z" fill="#d6d6d6"/></svg>
<svg class="a" style="left:197px;top:668px;" width="20" height="20" viewBox="0 0 20 20"><circle cx="8" cy="4" r="2.6" fill="#d6d6d6"/><g fill="none" stroke="#d6d6d6" stroke-width="1.4"><path d="M10 8 L18 13 L10 18 L2 13 Z M6 10.5 L14 15.5 M14 10.5 L6 15.5"/></g></svg>
<svg class="a" style="left:238px;top:668px;" width="20" height="20" viewBox="0 0 20 20"><g fill="none" stroke="#d6d6d6" stroke-width="1.5"><circle cx="8" cy="8" r="5.5"/><path d="M12 12 L17 17"/></g></svg>
<svg class="a" style="left:279px;top:668px;" width="20" height="20" viewBox="0 0 20 20"><g stroke="#d6d6d6" stroke-width="1.4"><path d="M10 3 V17 M3 10 H17"/></g><rect x="7.5" y="7.5" width="5" height="5" fill="#46607c" stroke="#d6d6d6" stroke-width="1.3"/><g fill="#d6d6d6"><circle cx="10" cy="2.5" r="2"/><circle cx="10" cy="17.5" r="2"/><circle cx="2.5" cy="10" r="2"/><circle cx="17.5" cy="10" r="2"/></g></svg>
<svg class="a" style="left:320px;top:667px;" width="20" height="22" viewBox="0 0 20 22"><rect x="2" y="1" width="11" height="8" rx="1" fill="#d6d6d6"/><path d="M13 4 L17 2 V8 L13 6 Z" fill="#d6d6d6"/><path d="M3 15 Q10 8 17 15 Q10 22 3 15 Z" fill="none" stroke="#d6d6d6" stroke-width="1.6"/><circle cx="10" cy="15" r="2.3" fill="#d6d6d6"/></svg>
<svg class="a" style="left:361px;top:668px;" width="20" height="20" viewBox="0 0 20 20"><path d="M1 11 L6 6 L11 11 V18 H8 V14 H4 V18 H1 Z" fill="#d6d6d6"/><rect x="11" y="2" width="8" height="16" fill="#d6d6d6"/><g fill="#585858"><rect x="13" y="5" width="1.5" height="2"/><rect x="15.8" y="5" width="1.5" height="2"/><rect x="13" y="9" width="1.5" height="2"/><rect x="15.8" y="9" width="1.5" height="2"/><rect x="13" y="13" width="1.5" height="2"/><rect x="15.8" y="13" width="1.5" height="2"/></g></svg>
<div class="t" style="left:402.50px;top:671.30px;font-size:15px;color:#d6d6d6;letter-spacing:-0.508px;">XB</div>
<svg class="a" style="left:443px;top:668px;" width="20" height="20" viewBox="0 0 20 20"><circle cx="10" cy="10" r="8.6" fill="none" stroke="#d6d6d6" stroke-width="1.4"/><path d="M14.5 5.5 L11.5 11.5 L5.5 14.5 L8.5 8.5 Z" fill="none" stroke="#d6d6d6" stroke-width="1.3"/><path d="M14.5 5.5 L8.5 8.5 L11.5 11.5 Z" fill="#d6d6d6"/></svg>
<div class="a" style="left:599.5px;top:398px;width:255px;height:296px;background:rgba(22,22,22,0.9);border-radius:5px"></div>
<div class="a" style="left:599.5px;top:398px;width:255px;height:21px;background:rgba(70,76,84,0.18);border-radius:5px 5px 0 0"></div>
<div class="a" style="left:606px;top:405px;width:20px;height:1.2px;background:#8a8a8a;"></div>
<div class="a" style="left:606px;top:409px;width:20px;height:1.2px;background:#8a8a8a;"></div>
<div class="t" style="left:633.60px;top:400.16px;font-size:16px;color:#b8b8b8;letter-spacing:-0.167px;">AI Navigation</div>
<svg class="a" style="left:610.4px;top:425px;" width="10" height="9" viewBox="0 0 10 9"><path d="M0 0 H10 L5 9 Z" fill="#8a8a8a"/></svg>
<div class="t" style="left:628.00px;top:421.96px;font-size:16px;color:#d2d2d2;letter-spacing:-0.143px;">Surfaces</div>
<div class="t" style="left:627.30px;top:445.66px;font-size:16px;color:#d2d2d2;letter-spacing:-0.171px;">Show Only Selected</div>
<div class="a" style="left:829px;top:446.2px;width:17.5px;height:15.5px;background:#2b2b2b;border-radius:2px"></div>
<div class="t" style="left:627.30px;top:465.66px;font-size:16px;color:#d2d2d2;letter-spacing:-0.171px;">Show NavMesh</div>
<div class="a" style="left:829px;top:466.2px;width:17.5px;height:15.5px;background:#2b2b2b;border-radius:2px"></div>
<svg class="a" style="left:831px;top:467.7px;" width="14" height="12" viewBox="0 0 14 12"><path d="M2 6 L5.5 9.5 L12 2.5" fill="none" stroke="#f2f2f2" stroke-width="2"/></svg>
<div class="t" style="left:627.30px;top:485.66px;font-size:16px;color:#d2d2d2;letter-spacing:-0.323px;">Show HeightMesh</div>
<div class="a" style="left:829px;top:486.2px;width:17.5px;height:15.5px;background:#2b2b2b;border-radius:2px"></div>
<svg class="a" style="left:610.4px;top:516.2px;" width="10" height="9" viewBox="0 0 10 9"><path d="M0 0 H10 L5 9 Z" fill="#8a8a8a"/></svg>
<div class="t" style="left:628.00px;top:513.16px;font-size:16px;color:#d2d2d2;letter-spacing:0.031px;">Agents</div>
<div class="t" style="left:627.30px;top:536.96px;font-size:16px;color:#d2d2d2;letter-spacing:-0.203px;">Show Path Polygons</div>
<div class="a" style="left:829px;top:537.5px;width:17.5px;height:15.5px;background:#2b2b2b;border-radius:2px"></div>
<svg class="a" style="left:831px;top:539px;" width="14" height="12" viewBox="0 0 14 12"><path d="M2 6 L5.5 9.5 L12 2.5" fill="none" stroke="#f2f2f2" stroke-width="2"/></svg>
<div class="t" style="left:627.30px;top:556.96px;font-size:16px;color:#d2d2d2;letter-spacing:-0.171px;">Show Path Query Nodes</div>
<div class="a" style="left:829px;top:557.5px;width:17.5px;height:15.5px;background:#2b2b2b;border-radius:2px"></div>
<div class="t" style="left:627.30px;top:576.96px;font-size:16px;color:#d2d2d2;letter-spacing:-0.086px;">Show Neighbours</div>
<div class="a" style="left:829px;top:577.5px;width:17.5px;height:15.5px;background:#2b2b2b;border-radius:2px"></div>
<div class="t" style="left:627.30px;top:596.96px;font-size:16px;color:#d2d2d2;letter-spacing:-0.198px;">Show Walls</div>
<div class="a" style="left:829px;top:597.5px;width:17.5px;height:15.5px;background:#2b2b2b;border-radius:2px"></div>
<div class="t" style="left:627.30px;top:616.96px;font-size:16px;color:#d2d2d2;letter-spacing:-0.073px;">Show Avoidance</div>
<div class="a" style="left:829px;top:617.5px;width:17.5px;height:15.5px;background:#2b2b2b;border-radius:2px"></div>
<svg class="a" style="left:610.4px;top:647px;" width="10" height="9" viewBox="0 0 10 9"><path d="M0 0 H10 L5 9 Z" fill="#8a8a8a"/></svg>
<div class="t" style="left:628.00px;top:643.96px;font-size:16px;color:#d2d2d2;letter-spacing:-0.127px;">Obstacles</div>
<div class="t" style="left:627.30px;top:667.96px;font-size:16px;color:#d2d2d2;letter-spacing:-0.210px;">Show Carve Hull</div>
<div class="a" style="left:829px;top:668.5px;width:17.5px;height:15.5px;background:#2b2b2b;border-radius:2px"></div>
<div class="a" style="left:0px;top:698px;width:858px;height:2px;background:#161616;"></div>
<svg class="a" style="left:13px;top:707px;" width="15" height="15" viewBox="0 0 15 15"><rect x="0.8" y="0.8" width="13.4" height="13.4" fill="none" stroke="#d0d0d0" stroke-width="1.5"/><g stroke="#d0d0d0" stroke-width="1.5"><path d="M3 4.5 H12 M3 7.5 H12 M3 10.5 H12"/></g></svg>
<div class="t" style="left:31.50px;top:708.46px;font-size:16px;color:#d2d2d2;letter-spacing:-0.243px;">Console</div>
<div class="a" style="left:125px;top:700px;width:109px;height:30px;background:#3c3c3c;border-radius:4px 4px 0 0"></div>
<svg class="a" style="left:136px;top:710px;" width="18" height="12" viewBox="0 0 18 12"><path d="M5 0.5 H13 Q17.5 0.5 17.5 6 Q17.5 11.5 13.5 11.5 Q12 11.5 11 9.5 H7 Q6 11.5 4.5 11.5 Q0.5 11.5 0.5 6 Q0.5 0.5 5 0.5 Z" fill="#d0d0d0"/><path d="M3 6 H7 M5 4 V8" stroke="#3c3c3c" stroke-width="1.3"/><circle cx="12" cy="4.8" r="1" fill="#3c3c3c"/><circle cx="14" cy="7" r="1" fill="#3c3c3c"/></svg>
<div class="t" style="left:157.00px;top:708.46px;font-size:16px;color:#d2d2d2;letter-spacing:-0.895px;">Game</div>
<svg class="a" style="left:638px;top:708px;" width="4" height="13" viewBox="0 0 4 13"><circle cx="2" cy="2" r="1.6" fill="#d0d0d0"/><circle cx="2" cy="6.5" r="1.6" fill="#d0d0d0"/><circle cx="2" cy="11" r="1.6" fill="#d0d0d0"/></svg>
<div class="a" style="left:0px;top:730px;width:658px;height:26px;background:#3c3c3c;"></div>
<div class="a" style="left:113px;top:730px;width:1px;height:26px;background:#2a2a2a;"></div>
<div class="a" style="left:220px;top:730px;width:1px;height:26px;background:#2a2a2a;"></div>
<div class="a" style="left:420px;top:730px;width:1px;height:26px;background:#2a2a2a;"></div>
<div class="a" style="left:570px;top:730px;width:1px;height:26px;background:#2a2a2a;"></div>
<div class="t" style="left:5.50px;top:735.96px;font-size:16px;color:#d2d2d2;letter-spacing:-0.895px;">Game</div>
<svg class="a" style="left:96px;top:742px;" width="11" height="6" viewBox="0 0 11 6"><path d="M0 0 H11 L5.5 6 Z" fill="#c8c8c8"/></svg>
<div class="t" style="left:125.00px;top:735.96px;font-size:16px;color:#d2d2d2;letter-spacing:-0.424px;">Display 1</div>
<svg class="a" style="left:203px;top:742px;" width="11" height="6" viewBox="0 0 11 6"><path d="M0 0 H11 L5.5 6 Z" fill="#c8c8c8"/></svg>
<div class="t" style="left:225.00px;top:735.96px;font-size:16px;color:#d2d2d2;letter-spacing:-0.039px;">2160x1080 Portrait</div>
<svg class="a" style="left:404px;top:742px;" width="11" height="6" viewBox="0 0 11 6"><path d="M0 0 H11 L5.5 6 Z" fill="#c8c8c8"/></svg>
<div class="t" style="left:429.00px;top:735.96px;font-size:16px;color:#d2d2d2;letter-spacing:-0.326px;">Scale</div>
<div class="a" style="left:487px;top:742px;width:25px;height:2px;background:#5a5a5a;"></div>
<svg class="a" style="left:475px;top:737px;" width="12" height="12" viewBox="0 0 12 12"><circle cx="6" cy="6" r="6" fill="#9a9a9a"/></svg>
<div class="t" style="left:520.00px;top:735.96px;font-size:16px;color:#d2d2d2;letter-spacing:-0.428px;">0.16x</div>
<div class="a" style="left:571px;top:730px;width:87px;height:26px;overflow:hidden">
<div class="t" style="left:5.50px;top:5.96px;font-size:16px;color:#d2d2d2;letter-spacing:-0.745px;">Play Focused</div>
</div>
<div class="a" style="left:0px;top:756px;width:658px;height:356px;background:#232323;"></div>
<svg class="a" style="left:239px;top:756px;" width="178" height="355" viewBox="0 0 178 355"><defs><filter id="gr2" x="0" y="0" width="100%" height="100%" color-interpolation-filters="sRGB"><feTurbulence type="fractalNoise" baseFrequency="0.14 0.11" numOctaves="4" seed="11" result="hi"/><feTurbulence type="fractalNoise" baseFrequency="0.035 0.025" numOctaves="2" seed="16" result="lo"/><feComposite in="hi" in2="lo" operator="arithmetic" k1="0" k2="0.85" k3="0.35" k4="-0.1"/><feColorMatrix type="matrix" values="0.85 0 0 0 -0.05  0.85 0 0 0 -0.058  0.85 0 0 0 -0.005  0 0 0 0 1"/></filter></defs><rect width="178" height="355" fill="#5a5a64" filter="url(#gr2)"/></svg>
<div class="t" style="left:267.00px;top:781.75px;font-size:22.5px;color:#f0961a;letter-spacing:-0.257px;">Planetes AR</div>
<div class="a" style="left:860px;top:99px;width:137px;height:29px;background:#3c3c3c;border-radius:4px 4px 0 0"></div>
<svg class="a" style="left:873px;top:109px;" width="14" height="11" viewBox="0 0 14 11"><g fill="#d0d0d0"><circle cx="1.3" cy="1.3" r="1.3"/><rect x="2.5" y="4.2" width="2" height="2"/><rect x="2.5" y="8.2" width="2" height="2"/></g><g stroke="#d0d0d0" stroke-width="1.1"><path d="M3 1.3 H13.5 M6 5.2 H13.5 M6 9.2 H13.5"/></g></svg>
<div class="t" style="left:892.50px;top:107.56px;font-size:16px;color:#d2d2d2;letter-spacing:-0.108px;">Hierarchy</div>
<svg class="a" style="left:1393px;top:107px;" width="11" height="13" viewBox="0 0 11 13"><path d="M3 5.5 V3 Q3 1 5.5 1 Q8 1 8 3.2" fill="none" stroke="#d0d0d0" stroke-width="1.3"/><rect x="0.8" y="6" width="9.4" height="6.2" fill="none" stroke="#d0d0d0" stroke-width="1.3"/></svg>
<svg class="a" style="left:1417px;top:107px;" width="4" height="13" viewBox="0 0 4 13"><circle cx="2" cy="2" r="1.6" fill="#d0d0d0"/><circle cx="2" cy="6.5" r="1.6" fill="#d0d0d0"/><circle cx="2" cy="11" r="1.6" fill="#d0d0d0"/></svg>
<div class="a" style="left:860px;top:128px;width:576px;height:26px;background:#3c3c3c;"></div>
<svg class="a" style="left:867px;top:134px;" width="17" height="16" viewBox="0 0 17 16"><path d="M8.5 1 V15 M1.5 8 H15.5" stroke="#d8d8d8" stroke-width="1.6"/></svg>
<svg class="a" style="left:888px;top:139px;" width="9" height="6" viewBox="0 0 9 6"><path d="M0 0 H9 L4.5 6 Z" fill="#c8c8c8"/></svg>
<div class="a" style="left:1025.8px;top:133px;width:406.2px;height:19.5px;background:#2a2a2a;border-radius:3px 0 0 3px"></div>
<div class="a" style="left:1410px;top:133px;width:22px;height:19.5px;background:#303030;"></div>
<svg class="a" style="left:1030px;top:136.5px;" width="14" height="12" viewBox="0 0 14 12"><circle cx="4.5" cy="4.5" r="3.3" fill="none" stroke="#c8c8c8" stroke-width="1.5"/><path d="M7 7 L10.5 10.5" stroke="#c8c8c8" stroke-width="1.6"/><path d="M10 3.5 H13.5 L11.75 5.5 Z" fill="#c8c8c8"/></svg>
<div class="t" style="left:1049.50px;top:134.46px;font-size:16px;color:#808080;letter-spacing:-0.860px;">All</div>
<svg class="a" style="left:1413px;top:135px;" width="16" height="16" viewBox="0 0 16 16"><g fill="none" stroke="#c8c8c8" stroke-width="1.2"><rect x="4.5" y="1" width="10" height="10"/><rect x="1" y="10" width="5" height="5"/><path d="M6 10 L12.5 3.5 M8.5 3.5 H12.5 V7.5"/></g></svg>
<div class="a" style="left:860px;top:154px;width:576px;height:544px;background:#383838;"></div>
<div class="a" style="left:860px;top:174px;width:40px;height:524px;background:#333333;"></div>
<div class="a" style="left:860px;top:154px;width:574.5px;height:20px;background:#2c2c2c;"></div>
<div class="a" style="left:860px;top:274px;width:574.5px;height:20px;background:#4d4d4d;"></div>
<div class="a" style="left:860px;top:274px;width:40px;height:20px;background:#474747;"></div>
<svg class="a" style="left:903px;top:161px;" width="10" height="9" viewBox="0 0 10 9"><path d="M0 0 H10 L5 9 Z" fill="#7c7c7c"/></svg>
<svg class="a" style="left:919px;top:157px;" width="16" height="17" viewBox="0 0 16 17"><g fill="none" stroke="#e8e8e8" stroke-width="2.3" stroke-linejoin="round" stroke-linecap="butt"><path d="M6.4 2 L1.6 4.8 V11.2"/><path d="M9.6 2 L14.4 4.8 V11.2"/><path d="M2.6 13.2 L8 16 L13.4 13.2"/><path d="M8 8.8 V16 M8 8.8 L4 6.4 M8 8.8 L12 6.4"/></g><path d="M5.6 6 L8 4.6 L10.4 6 L8 7.4 Z" fill="#e8e8e8"/></svg>
<div class="t" style="left:941.70px;top:156.16px;font-size:16px;color:#f0f0f0;letter-spacing:-0.186px;font-weight:700;">HomeScreen*</div>
<svg class="a" style="left:1417px;top:158px;" width="4" height="13" viewBox="0 0 4 13"><circle cx="2" cy="2" r="1.6" fill="#d0d0d0"/><circle cx="2" cy="6.5" r="1.6" fill="#d0d0d0"/><circle cx="2" cy="11" r="1.6" fill="#d0d0d0"/></svg>
<svg class="a" style="left:936px;top:176px;" width="16" height="16" viewBox="0 0 16 16"><g fill="none" stroke="#c4c4c4" stroke-width="1.3" stroke-linejoin="round"><path d="M8 1 L14.5 4.5 V11.5 L8 15 L1.5 11.5 V4.5 Z"/><path d="M1.5 4.5 L8 8 L14.5 4.5 M8 8 V15"/></g></svg>
<div class="t" style="left:957.50px;top:176.26px;font-size:16px;color:#d2d2d2;letter-spacing:-0.321px;">Main Camera</div>
<svg class="a" style="left:936px;top:196px;" width="16" height="16" viewBox="0 0 16 16"><g fill="none" stroke="#c4c4c4" stroke-width="1.3" stroke-linejoin="round"><path d="M8 1 L14.5 4.5 V11.5 L8 15 L1.5 11.5 V4.5 Z"/><path d="M1.5 4.5 L8 8 L14.5 4.5 M8 8 V15"/></g></svg>
<div class="t" style="left:957.50px;top:196.26px;font-size:16px;color:#d2d2d2;letter-spacing:-0.043px;">Directional Light</div>
<svg class="a" style="left:936px;top:216px;" width="16" height="16" viewBox="0 0 16 16"><g fill="none" stroke="#c4c4c4" stroke-width="1.3" stroke-linejoin="round"><path d="M8 1 L14.5 4.5 V11.5 L8 15 L1.5 11.5 V4.5 Z"/><path d="M1.5 4.5 L8 8 L14.5 4.5 M8 8 V15"/></g></svg>
<div class="t" style="left:957.50px;top:216.26px;font-size:16px;color:#d2d2d2;letter-spacing:-0.375px;">Canvas</div>
<svg class="a" style="left:952.5px;top:236px;" width="16" height="16" viewBox="0 0 16 16"><g fill="none" stroke="#c4c4c4" stroke-width="1.3" stroke-linejoin="round"><path d="M8 1 L14.5 4.5 V11.5 L8 15 L1.5 11.5 V4.5 Z"/><path d="M1.5 4.5 L8 8 L14.5 4.5 M8 8 V15"/></g></svg>
<div class="t" style="left:975.00px;top:236.26px;font-size:16px;color:#d2d2d2;letter-spacing:-0.089px;">Background</div>
<svg class="a" style="left:952.5px;top:256px;" width="16" height="16" viewBox="0 0 16 16"><g fill="none" stroke="#c4c4c4" stroke-width="1.3" stroke-linejoin="round"><path d="M8 1 L14.5 4.5 V11.5 L8 15 L1.5 11.5 V4.5 Z"/><path d="M1.5 4.5 L8 8 L14.5 4.5 M8 8 V15"/></g></svg>
<div class="t" style="left:975.00px;top:256.26px;font-size:16px;color:#d2d2d2;letter-spacing:-0.150px;">Portada</div>
<svg class="a" style="left:952.5px;top:276px;" width="16" height="16" viewBox="0 0 16 16"><g fill="none" stroke="#c4c4c4" stroke-width="1.3" stroke-linejoin="round"><path d="M8 1 L14.5 4.5 V11.5 L8 15 L1.5 11.5 V4.5 Z"/><path d="M1.5 4.5 L8 8 L14.5 4.5 M8 8 V15"/></g></svg>
<div class="t" style="left:975.00px;top:276.26px;font-size:16px;color:#d2d2d2;letter-spacing:0.039px;">Button</div>
<svg class="a" style="left:936px;top:296px;" width="16" height="16" viewBox="0 0 16 16"><g fill="none" stroke="#c4c4c4" stroke-width="1.3" stroke-linejoin="round"><path d="M8 1 L14.5 4.5 V11.5 L8 15 L1.5 11.5 V4.5 Z"/><path d="M1.5 4.5 L8 8 L14.5 4.5 M8 8 V15"/></g></svg>
<div class="t" style="left:957.50px;top:296.26px;font-size:16px;color:#d2d2d2;letter-spacing:-0.206px;">EventSystem</div>
<svg class="a" style="left:920px;top:221px;" width="10" height="9" viewBox="0 0 10 9"><path d="M0 0 H10 L5 9 Z" fill="#7c7c7c"/></svg>
<div class="a" style="left:660px;top:700px;width:776px;height:29px;background:#161616;"></div>
<div class="a" style="left:659.5px;top:700px;width:118px;height:29px;background:#3c3c3c;border-radius:4px 4px 0 0"></div>
<svg class="a" style="left:672px;top:710px;" width="15" height="12" viewBox="0 0 15 12"><path d="M0.5 0.5 H5.5 L7 2.5 H14.5 V11.5 H0.5 Z" fill="#d0d0d0"/></svg>
<div class="t" style="left:691.60px;top:708.96px;font-size:16px;color:#d2d2d2;letter-spacing:-0.071px;">Project</div>
<svg class="a" style="left:1393px;top:708px;" width="11" height="13" viewBox="0 0 11 13"><path d="M3 5.5 V3 Q3 1 5.5 1 Q8 1 8 3.2" fill="none" stroke="#d0d0d0" stroke-width="1.3"/><rect x="0.8" y="6" width="9.4" height="6.2" fill="none" stroke="#d0d0d0" stroke-width="1.3"/></svg>
<svg class="a" style="left:1417px;top:708px;" width="4" height="13" viewBox="0 0 4 13"><circle cx="2" cy="2" r="1.6" fill="#d0d0d0"/><circle cx="2" cy="6.5" r="1.6" fill="#d0d0d0"/><circle cx="2" cy="11" r="1.6" fill="#d0d0d0"/></svg>
<div class="a" style="left:660px;top:729px;width:776px;height:27px;background:#3c3c3c;"></div>
<svg class="a" style="left:667px;top:734px;" width="17" height="16" viewBox="0 0 17 16"><path d="M8.5 1 V15 M1.5 8 H15.5" stroke="#d8d8d8" stroke-width="1.6"/></svg>
<svg class="a" style="left:688px;top:739px;" width="9" height="6" viewBox="0 0 9 6"><path d="M0 0 H9 L4.5 6 Z" fill="#c8c8c8"/></svg>
<div class="a" style="left:854.6px;top:734px;width:395.4px;height:18.5px;background:#2a2a2a;border-radius:3px"></div>
<svg class="a" style="left:860px;top:737px;" width="12" height="12" viewBox="0 0 12 12"><circle cx="4.5" cy="4.5" r="3.2" fill="none" stroke="#c8c8c8" stroke-width="1.5"/><path d="M7 7 L10 10" stroke="#c8c8c8" stroke-width="1.6"/></svg>
<div class="a" style="left:1228px;top:734px;width:22px;height:18.5px;background:#303030;"></div>
<svg class="a" style="left:1231px;top:735px;" width="16" height="16" viewBox="0 0 16 16"><g fill="none" stroke="#c8c8c8" stroke-width="1.2"><rect x="4.5" y="1" width="10" height="10"/><rect x="1" y="10" width="5" height="5"/><path d="M6 10 L12.5 3.5 M8.5 3.5 H12.5 V7.5"/></g></svg>
<div class="a" style="left:1254px;top:731px;width:1px;height:23px;background:#2c2c2c;"></div>
<div class="a" style="left:1286px;top:731px;width:1px;height:23px;background:#2c2c2c;"></div>
<div class="a" style="left:1318px;top:731px;width:1px;height:23px;background:#2c2c2c;"></div>
<div class="a" style="left:1350px;top:731px;width:1px;height:23px;background:#2c2c2c;"></div>
<div class="a" style="left:1384px;top:731px;width:1px;height:23px;background:#2c2c2c;"></div>
<svg class="a" style="left:1262px;top:734px;" width="16" height="18" viewBox="0 0 16 18"><rect x="1.5" y="0.5" width="6.5" height="6.5" fill="#c8c8c8"/><circle cx="5" cy="12.5" r="4.2" fill="#c8c8c8"/><path d="M11 5 L15.5 12 H7.5 Z" fill="#c8c8c8"/></svg>
<svg class="a" style="left:1294px;top:735px;" width="16" height="16" viewBox="0 0 16 16"><path d="M8.5 1 H15 V7.5 L7.5 15 L1 8.5 Z" fill="#c8c8c8"/><circle cx="12" cy="4" r="1.3" fill="#3c3c3c"/></svg>
<svg class="a" style="left:1325px;top:734px;" width="18" height="18" viewBox="0 0 18 18"><circle cx="9" cy="9" r="8.5" fill="#d8d8d8"/><rect x="7.8" y="3.5" width="2.4" height="7" fill="#3c3c3c"/><rect x="7.8" y="12" width="2.4" height="2.4" fill="#3c3c3c"/></svg>
<svg class="a" style="left:1359px;top:735px;" width="17" height="16" viewBox="0 0 17 16"><path d="M8.5 0.5 L10.8 5.6 L16.3 6.1 L12.1 9.8 L13.4 15.3 L8.5 12.4 L3.6 15.3 L4.9 9.8 L0.7 6.1 L6.2 5.6 Z" fill="#8c8c8c"/></svg>
<svg class="a" style="left:1392px;top:737px;" width="19" height="12" viewBox="0 0 19 12"><path d="M0.8 6 Q9.5 -3 18.2 6 Q9.5 15 0.8 6 Z" fill="#5a5a5a" stroke="#707070" stroke-width="1.5"/><circle cx="9.5" cy="6" r="3" fill="#747474"/></svg>
<div class="t" style="left:1411.50px;top:735.96px;font-size:16px;color:#d2d2d2;letter-spacing:0.102px;">28</div>
<div class="a" style="left:660px;top:756px;width:243px;height:356px;background:#383838;"></div>
<div class="a" style="left:903px;top:756px;width:15px;height:356px;background:#3a3a3a;"></div>
<div class="a" style="left:905px;top:797px;width:12px;height:116px;background:#5e5e5e;border-radius:6px"></div>
<svg class="a" style="left:905px;top:763px;" width="11" height="7" viewBox="0 0 11 7"><path d="M0 7 H11 L5.5 0 Z" fill="#d8d8d8"/></svg>
<svg class="a" style="left:905px;top:1099px;" width="11" height="7" viewBox="0 0 11 7"><path d="M0 0 H11 L5.5 7 Z" fill="#d8d8d8"/></svg>
<div class="a" style="left:917px;top:756px;width:1px;height:356px;background:#2a2a2a;"></div>
<div class="a" style="left:918px;top:756px;width:518px;height:356px;background:#383838;"></div>
<div class="a" style="left:918px;top:756px;width:518px;height:25px;background:#3e3e3e;"></div>
<div class="t" style="left:924.00px;top:760.46px;font-size:16px;color:#c4c4c4;letter-spacing:-0.169px;">Assets</div>
<svg class="a" style="left:980.5px;top:763px;" width="8" height="12" viewBox="0 0 8 12"><path d="M1 1 L6 6 L1 11" fill="none" stroke="#a0a0a0" stroke-width="1.5"/></svg>
<div class="t" style="left:994.50px;top:760.46px;font-size:16px;color:#e8e8e8;letter-spacing:-0.508px;font-weight:700;">Scenes</div>
<svg class="a" style="left:940.5px;top:785px;" width="16" height="17" viewBox="0 0 16 17"><g fill="none" stroke="#e8e8e8" stroke-width="2.3" stroke-linejoin="round" stroke-linecap="butt"><path d="M6.4 2 L1.6 4.8 V11.2"/><path d="M9.6 2 L14.4 4.8 V11.2"/><path d="M2.6 13.2 L8 16 L13.4 13.2"/><path d="M8 8.8 V16 M8 8.8 L4 6.4 M8 8.8 L12 6.4"/></g><path d="M5.6 6 L8 4.6 L10.4 6 L8 7.4 Z" fill="#e8e8e8"/></svg>
<div class="t" style="left:961.00px;top:785.46px;font-size:16px;color:#d2d2d2;letter-spacing:-0.267px;">HomeScreen</div>
<svg class="a" style="left:940.5px;top:805px;" width="16" height="17" viewBox="0 0 16 17"><g fill="none" stroke="#e8e8e8" stroke-width="2.3" stroke-linejoin="round" stroke-linecap="butt"><path d="M6.4 2 L1.6 4.8 V11.2"/><path d="M9.6 2 L14.4 4.8 V11.2"/><path d="M2.6 13.2 L8 16 L13.4 13.2"/><path d="M8 8.8 V16 M8 8.8 L4 6.4 M8 8.8 L12 6.4"/></g><path d="M5.6 6 L8 4.6 L10.4 6 L8 7.4 Z" fill="#e8e8e8"/></svg>
<div class="t" style="left:961.00px;top:805.46px;font-size:16px;color:#d2d2d2;letter-spacing:-0.196px;">Planets</div>
<div class="a" style="left:918px;top:1086px;width:518px;height:26px;background:#3a3a3a;"></div>
<div class="a" style="left:1354px;top:1098px;width:62px;height:2px;background:#5a5a5a;"></div>
<svg class="a" style="left:1345px;top:1093px;" width="13" height="13" viewBox="0 0 13 13"><circle cx="6.5" cy="6.5" r="6.5" fill="#9a9a9a"/></svg>
<div class="a" style="left:660px;top:992px;width:243px;height:20px;background:#4d4d4d;"></div>
<div class="a" style="left:660px;top:756px;width:243px;height:356px;overflow:hidden">
<svg class="a" style="left:4px;top:22px;" width="10" height="9" viewBox="0 0 10 9"><path d="M0 0 H10 L5 9 Z" fill="#7c7c7c"/></svg>
<svg class="a" style="left:21.0px;top:20.5px;" width="18" height="13" viewBox="0 0 18 13"><path d="M0.8 12 V1 H5.5 L7 2.8 H13.5 V5" fill="none" stroke="#d0d0d0" stroke-width="1.5"/><path d="M0.8 12 L4 5.2 H17.2 L14 12 Z" fill="#d0d0d0"/></svg>
<div class="t" style="left:43.40px;top:18.76px;font-size:16px;color:#e4e4e4;letter-spacing:-0.247px;font-weight:700;">Assets</div>
<svg class="a" style="left:22px;top:42px;" width="10" height="9" viewBox="0 0 10 9"><path d="M0 0 H10 L5 9 Z" fill="#7c7c7c"/></svg>
<svg class="a" style="left:38px;top:40.5px;" width="18" height="13" viewBox="0 0 18 13"><path d="M0.8 12 V1 H5.5 L7 2.8 H13.5 V5" fill="none" stroke="#d0d0d0" stroke-width="1.5"/><path d="M0.8 12 L4 5.2 H17.2 L14 12 Z" fill="#d0d0d0"/></svg>
<div class="t" style="left:59.40px;top:38.76px;font-size:16px;color:#d2d2d2;letter-spacing:-0.120px;">Planets of the Solar Syste</div>
<svg class="a" style="left:56.60000000000002px;top:60.5px;" width="16" height="13" viewBox="0 0 16 13"><path d="M0.5 0.5 H6 L7.5 2.5 H15 V12.5 H0.5 Z" fill="#d0d0d0"/></svg>
<div class="t" style="left:76.60px;top:58.76px;font-size:16px;color:#d2d2d2;letter-spacing:-0.156px;">Geometry</div>
<svg class="a" style="left:56.60000000000002px;top:80.5px;" width="16" height="13" viewBox="0 0 16 13"><path d="M0.5 0.5 H6 L7.5 2.5 H15 V12.5 H0.5 Z" fill="#d0d0d0"/></svg>
<div class="t" style="left:76.60px;top:78.76px;font-size:16px;color:#d2d2d2;letter-spacing:-0.101px;">Materials</div>
<svg class="a" style="left:56.60000000000002px;top:100.5px;" width="16" height="13" viewBox="0 0 16 13"><path d="M0.5 0.5 H6 L7.5 2.5 H15 V12.5 H0.5 Z" fill="#d0d0d0"/></svg>
<div class="t" style="left:76.60px;top:98.76px;font-size:16px;color:#d2d2d2;letter-spacing:-0.163px;">Prefabs</div>
<svg class="a" style="left:56.60000000000002px;top:120.5px;" width="16" height="13" viewBox="0 0 16 13"><path d="M0.5 0.5 H6 L7.5 2.5 H15 V12.5 H0.5 Z" fill="#d0d0d0"/></svg>
<div class="t" style="left:76.60px;top:118.76px;font-size:16px;color:#d2d2d2;letter-spacing:-0.229px;">Scenes</div>
<svg class="a" style="left:56.60000000000002px;top:140.5px;" width="16" height="13" viewBox="0 0 16 13"><path d="M0.5 0.5 H6 L7.5 2.5 H15 V12.5 H0.5 Z" fill="#d0d0d0"/></svg>
<div class="t" style="left:76.60px;top:138.76px;font-size:16px;color:#d2d2d2;letter-spacing:0.023px;">Settings</div>
<svg class="a" style="left:56.60000000000002px;top:160.5px;" width="16" height="13" viewBox="0 0 16 13"><path d="M0.5 0.5 H6 L7.5 2.5 H15 V12.5 H0.5 Z" fill="#d0d0d0"/></svg>
<div class="t" style="left:76.60px;top:158.76px;font-size:16px;color:#d2d2d2;letter-spacing:-0.228px;">Shaders</div>
<svg class="a" style="left:40px;top:182px;" width="10" height="9" viewBox="0 0 10 9"><path d="M0 0 H10 L5 9 Z" fill="#7c7c7c"/></svg>
<svg class="a" style="left:56.60000000000002px;top:180.5px;" width="18" height="13" viewBox="0 0 18 13"><path d="M0.8 12 V1 H5.5 L7 2.8 H13.5 V5" fill="none" stroke="#d0d0d0" stroke-width="1.5"/><path d="M0.8 12 L4 5.2 H17.2 L14 12 Z" fill="#d0d0d0"/></svg>
<div class="t" style="left:76.60px;top:178.76px;font-size:16px;color:#d2d2d2;letter-spacing:0.191px;">Textures</div>
<svg class="a" style="left:73.5px;top:200.5px;" width="16" height="13" viewBox="0 0 16 13"><path d="M0.5 0.5 H6 L7.5 2.5 H15 V12.5 H0.5 Z" fill="#d0d0d0"/></svg>
<div class="t" style="left:94.00px;top:198.76px;font-size:16px;color:#d2d2d2;letter-spacing:-1.027px;">FX</div>
<svg class="a" style="left:73.5px;top:220.5px;" width="16" height="13" viewBox="0 0 16 13"><path d="M0.5 0.5 H6 L7.5 2.5 H15 V12.5 H0.5 Z" fill="#d0d0d0"/></svg>
<div class="t" style="left:94.00px;top:218.76px;font-size:16px;color:#d2d2d2;letter-spacing:-0.268px;">Planets</div>
<svg class="a" style="left:38px;top:240.5px;" width="16" height="13" viewBox="0 0 16 13"><path d="M0.5 0.5 H6 L7.5 2.5 H15 V12.5 H0.5 Z" fill="#d0d0d0"/></svg>
<div class="t" style="left:59.40px;top:238.76px;font-size:16px;color:#d2d2d2;letter-spacing:-0.279px;">Scenes</div>
<svg class="a" style="left:38px;top:260.5px;" width="16" height="13" viewBox="0 0 16 13"><path d="M0.5 0.5 H6 L7.5 2.5 H15 V12.5 H0.5 Z" fill="#d0d0d0"/></svg>
<div class="t" style="left:59.40px;top:258.76px;font-size:16px;color:#d2d2d2;letter-spacing:0.023px;">Settings</div>
<svg class="a" style="left:22px;top:282px;" width="10" height="9" viewBox="0 0 10 9"><path d="M0 0 H10 L5 9 Z" fill="#7c7c7c"/></svg>
<svg class="a" style="left:38px;top:280.5px;" width="18" height="13" viewBox="0 0 18 13"><path d="M0.8 12 V1 H5.5 L7 2.8 H13.5 V5" fill="none" stroke="#d0d0d0" stroke-width="1.5"/><path d="M0.8 12 L4 5.2 H17.2 L14 12 Z" fill="#d0d0d0"/></svg>
<div class="t" style="left:59.40px;top:278.76px;font-size:16px;color:#d2d2d2;letter-spacing:0.016px;">TextMesh Pro</div>
<svg class="a" style="left:56.60000000000002px;top:300.5px;" width="16" height="13" viewBox="0 0 16 13"><path d="M0.5 0.5 H6 L7.5 2.5 H15 V12.5 H0.5 Z" fill="#d0d0d0"/></svg>
<div class="t" style="left:76.60px;top:298.76px;font-size:16px;color:#d2d2d2;letter-spacing:-0.083px;">Fonts</div>
<svg class="a" style="left:40px;top:322px;" width="10" height="9" viewBox="0 0 10 9"><path d="M0 0 H10 L5 9 Z" fill="#7c7c7c"/></svg>
<svg class="a" style="left:56.60000000000002px;top:320.5px;" width="18" height="13" viewBox="0 0 18 13"><path d="M0.8 12 V1 H5.5 L7 2.8 H13.5 V5" fill="none" stroke="#d0d0d0" stroke-width="1.5"/><path d="M0.8 12 L4 5.2 H17.2 L14 12 Z" fill="#d0d0d0"/></svg>
<div class="t" style="left:76.60px;top:318.76px;font-size:16px;color:#d2d2d2;letter-spacing:-0.320px;">Resources</div>
<svg class="a" style="left:73.5px;top:340.5px;" width="16" height="13" viewBox="0 0 16 13"><path d="M0.5 0.5 H6 L7.5 2.5 H15 V12.5 H0.5 Z" fill="#d0d0d0"/></svg>
<div class="t" style="left:94.00px;top:338.76px;font-size:16px;color:#d2d2d2;letter-spacing:-0.146px;">Fonts &amp; Materials</div>
</div>
<div class="a" style="left:1436px;top:99px;width:2px;height:1013px;background:#161616;"></div>
<div class="a" style="left:1438px;top:99px;width:135px;height:29px;background:#3c3c3c;border-radius:4px 4px 0 0"></div>
<div class="a" style="left:1438px;top:99px;width:135px;height:2.2px;background:#3a79bb;border-radius:3px 3px 0 0"></div>
<svg class="a" style="left:1451.5px;top:108.5px;" width="13" height="13" viewBox="0 0 13 13"><circle cx="6.5" cy="6.5" r="6.5" fill="#d0d0d0"/><rect x="5.4" y="5.3" width="2.4" height="5.2" fill="#3c3c3c"/><circle cx="6.6" cy="3.4" r="1.3" fill="#3c3c3c"/></svg>
<div class="t" style="left:1470.40px;top:107.36px;font-size:16px;color:#d2d2d2;letter-spacing:0.087px;">Inspector</div>
<svg class="a" style="left:1875px;top:107px;" width="11" height="13" viewBox="0 0 11 13"><path d="M3 5.5 V3 Q3 1 5.5 1 Q8 1 8 3.2" fill="none" stroke="#d0d0d0" stroke-width="1.3"/><rect x="0.8" y="6" width="9.4" height="6.2" fill="none" stroke="#d0d0d0" stroke-width="1.3"/></svg>
<svg class="a" style="left:1899px;top:107px;" width="4" height="13" viewBox="0 0 4 13"><circle cx="2" cy="2" r="1.6" fill="#d0d0d0"/><circle cx="2" cy="6.5" r="1.6" fill="#d0d0d0"/><circle cx="2" cy="11" r="1.6" fill="#d0d0d0"/></svg>
<div class="a" style="left:1438px;top:128px;width:481px;height:984px;background:#383838;"></div>
<div class="a" style="left:1438px;top:128px;width:481px;height:75px;background:#3c3c3c;"></div>
<div class="a" style="left:1438px;top:203px;width:481px;height:1px;background:#242424;"></div>
<svg class="a" style="left:1446px;top:142px;" width="26" height="27" viewBox="0 0 26 27"><g fill="none" stroke="#cfcfcf" stroke-width="1.6" stroke-linejoin="round"><path d="M13 1.5 L24.5 7.5 V19.5 L13 25.5 L1.5 19.5 V7.5 Z"/><path d="M1.5 7.5 L13 13.5 L24.5 7.5 M13 13.5 V25.5"/></g></svg>
<svg class="a" style="left:1470px;top:168.5px;" width="10" height="6" viewBox="0 0 10 6"><path d="M0 0 H10 L5.0 6 Z" fill="#c8c8c8"/></svg>
<div class="a" style="left:1497px;top:143px;width:17px;height:17px;background:#262626;border-radius:3px"></div>
<svg class="a" style="left:1499px;top:145px;" width="13" height="13" viewBox="0 0 13 13"><path d="M1.5 6.5 L5 10 L11.5 2.5" fill="none" stroke="#f2f2f2" stroke-width="2"/></svg>
<div class="a" style="left:1522px;top:140.5px;width:296px;height:22px;background:#2a2a2a;border-radius:3px"></div>
<div class="t" style="left:1525.40px;top:144.56px;font-size:16px;color:#e6e6e6;letter-spacing:-0.589px;font-weight:700;">Button</div>
<div class="a" style="left:1824px;top:144.8px;width:16.5px;height:16.5px;background:#2a2a2a;border-radius:3px"></div>
<div class="t" style="left:1847.00px;top:144.26px;font-size:16px;color:#c8c8c8;letter-spacing:-0.003px;">Static</div>
<svg class="a" style="left:1902px;top:149px;" width="10" height="6" viewBox="0 0 10 6"><path d="M0 0 H10 L5.0 6 Z" fill="#c8c8c8"/></svg>
<div class="t" style="left:1488.70px;top:173.76px;font-size:16px;color:#c4c4c4;letter-spacing:-0.166px;">Tag</div>
<div class="a" style="left:1521px;top:171px;width:171.5px;height:21px;background:#515151;border-radius:3px"></div>
<div class="t" style="left:1525.00px;top:173.46px;font-size:16px;color:#d8d8d8;letter-spacing:0.001px;">Untagged</div>
<svg class="a" style="left:1676px;top:179px;" width="10" height="6" viewBox="0 0 10 6"><path d="M0 0 H10 L5.0 6 Z" fill="#c8c8c8"/></svg>
<div class="t" style="left:1709.30px;top:173.76px;font-size:16px;color:#c4c4c4;letter-spacing:-0.406px;">Layer</div>
<div class="a" style="left:1754.5px;top:171px;width:158.5px;height:21px;background:#515151;border-radius:3px"></div>
<div class="t" style="left:1760.00px;top:173.46px;font-size:16px;color:#d8d8d8;letter-spacing:-1.300px;">UI</div>
<svg class="a" style="left:1896px;top:179px;" width="11" height="6" viewBox="0 0 11 6"><path d="M0 0 H11 L5.5 6 Z" fill="#c8c8c8"/></svg>
<div class="a" style="left:1438px;top:204px;width:481px;height:26px;background:#3e3e3e;"></div>
<div class="a" style="left:1438px;top:230px;width:481px;height:1px;background:#2e2e2e;"></div>
<svg class="a" style="left:1446.7px;top:213.5px;" width="9" height="9" viewBox="0 0 9 9"><path d="M0 0 H9 L4.5 9 Z" fill="#8a8a8a"/></svg>
<svg class="a" style="left:1464px;top:209.5px;" width="17" height="17" viewBox="0 0 17 17"><g fill="#d0d0d0"><path d="M1 1 L6.5 2 L2 6.5 Z M16 1 L10.5 2 L15 6.5 Z M1 16 L2 10.5 L6.5 15 Z M16 16 L15 10.5 L10.5 15 Z"/><rect x="4" y="4" width="3" height="3" transform="rotate(45 5.5 5.5)"/></g></svg>
<div class="t" style="left:1513.70px;top:209.96px;font-size:16px;color:#dcdcdc;letter-spacing:-0.291px;font-weight:700;">Rect Transform</div>
<svg class="a" style="left:1846.5px;top:209.5px;" width="14" height="14" viewBox="0 0 14 14"><circle cx="7" cy="7" r="6.8" fill="#d8d8d8"/><path d="M4.8 5.3 Q4.8 3 7 3 Q9.3 3 9.3 5.1 Q9.3 6.5 7.4 7.2 V8.5" fill="none" stroke="#3e3e3e" stroke-width="1.6"/><circle cx="7.3" cy="10.6" r="1" fill="#3e3e3e"/></svg>
<svg class="a" style="left:1872px;top:209.5px;" width="14" height="14" viewBox="0 0 14 14"><g stroke="#d0d0d0" stroke-width="1.4"><path d="M0 4 H14 M0 10 H14"/></g><g fill="#d0d0d0"><rect x="8.5" y="1" width="2.6" height="6"/><rect x="3" y="7" width="2.6" height="6"/></g></svg>
<svg class="a" style="left:1901px;top:210px;" width="4" height="13" viewBox="0 0 4 13"><circle cx="2" cy="2" r="1.6" fill="#d0d0d0"/><circle cx="2" cy="6.5" r="1.6" fill="#d0d0d0"/><circle cx="2" cy="11" r="1.6" fill="#d0d0d0"/></svg>
<div class="t" style="left:1471.60px;top:241.97px;font-size:13.5px;color:#c4c4c4;letter-spacing:0.212px;">stretch</div>
<div class="t" style="left:1456.3px;top:288px;transform:translate(-50%,-50%) rotate(-90deg);font-size:13.5px;color:#c4c4c4;letter-spacing:0.4px">stretch</div>
<svg class="a" style="left:1470px;top:266px;" width="46" height="46" viewBox="0 0 46 46"><rect x="1.5" y="1.5" width="43" height="43" fill="none" stroke="#8c8c8c" stroke-width="1"/><g fill="#e8a020"><rect x="0" y="0" width="2.5" height="2.5"/><rect x="43.5" y="0" width="2.5" height="2.5"/><rect x="0" y="43.5" width="2.5" height="2.5"/><rect x="43.5" y="43.5" width="2.5" height="2.5"/></g><rect x="13.5" y="11.5" width="20" height="20" fill="#3a3a3a" stroke="#9a9a9a" stroke-width="1.2"/><g stroke="#1ea8e8" stroke-width="1.5"><path d="M23.5 14 V29 M16 21.5 H31"/></g><g fill="#1ea8e8"><path d="M21 15.5 L23.5 13 L26 15.5 Z M21 27.5 L23.5 30 L26 27.5 Z M17.5 19 L15 21.5 L17.5 24 Z M29.5 19 L32 21.5 L29.5 24 Z"/></g></svg>
<div class="t" style="left:1627.70px;top:242.96px;font-size:16px;color:#c4c4c4;letter-spacing:0.578px;">Left</div>
<div class="t" style="left:1725.50px;top:242.96px;font-size:16px;color:#c4c4c4;letter-spacing:0.401px;">Top</div>
<div class="t" style="left:1822.30px;top:242.96px;font-size:16px;color:#c4c4c4;letter-spacing:-0.359px;">Pos Z</div>
<div class="a" style="left:1627.7px;top:261.2px;width:93.09999999999991px;height:22.100000000000023px;background:#2a2a2a;border-radius:3px"></div>
<div class="a" style="left:1724.5px;top:261.2px;width:93.20000000000005px;height:22.100000000000023px;background:#2a2a2a;border-radius:3px"></div>
<div class="a" style="left:1821.4px;top:261.2px;width:93.19999999999982px;height:22.100000000000023px;background:#2a2a2a;border-radius:3px"></div>
<div class="t" style="left:1630.40px;top:265.36px;font-size:16px;color:#d2d2d2;letter-spacing:0.000px;">0</div>
<div class="t" style="left:1727.30px;top:265.36px;font-size:16px;color:#d2d2d2;letter-spacing:-0.001px;">250</div>
<div class="t" style="left:1824.00px;top:265.36px;font-size:16px;color:#d2d2d2;letter-spacing:0.000px;">0</div>
<div class="t" style="left:1627.70px;top:287.96px;font-size:16px;color:#c4c4c4;letter-spacing:-0.272px;">Right</div>
<div class="t" style="left:1725.50px;top:287.96px;font-size:16px;color:#c4c4c4;letter-spacing:-0.031px;">Bottom</div>
<div class="a" style="left:1627.7px;top:306px;width:93.09999999999991px;height:22.19999999999999px;background:#2a2a2a;border-radius:3px"></div>
<div class="a" style="left:1724.5px;top:306px;width:93.20000000000005px;height:22.19999999999999px;background:#2a2a2a;border-radius:3px"></div>
<div class="t" style="left:1630.40px;top:310.56px;font-size:16px;color:#d2d2d2;letter-spacing:0.000px;">0</div>
<div class="t" style="left:1727.30px;top:310.56px;font-size:16px;color:#d2d2d2;letter-spacing:0.000px;">0</div>
<div class="a" style="left:1851px;top:305px;width:63px;height:23px;background:#4c4c4c;border-radius:3px"></div>
<div class="a" style="left:1880px;top:305px;width:1px;height:23px;background:#3a3a3a;"></div>
<svg class="a" style="left:1858px;top:309px;" width="15" height="15" viewBox="0 0 15 15"><rect x="1" y="1" width="13" height="13" fill="none" stroke="#8a8a8a" stroke-width="1.3" stroke-dasharray="3 2"/></svg>
<div class="t" style="left:1888.00px;top:310.15px;font-size:14px;color:#8a8a8a;letter-spacing:0.000px;">R</div>
<div class="t" style="left:1462.40px;top:334.96px;font-size:16px;color:#c4c4c4;letter-spacing:-0.158px;">Anchors</div>
<svg class="a" style="left:1448px;top:337.5px;" width="9" height="10" viewBox="0 0 9 10"><path d="M0 0 L9 5 L0 10 Z" fill="#8a8a8a"/></svg>
<div class="t" style="left:1462.40px;top:359.96px;font-size:16px;color:#c4c4c4;letter-spacing:0.084px;">Pivot</div>
<div class="t" style="left:1628.60px;top:359.96px;font-size:16px;color:#c4c4c4;letter-spacing:0.000px;">X</div>
<div class="a" style="left:1642px;top:356.4px;width:78.79999999999995px;height:21.600000000000023px;background:#2a2a2a;border-radius:3px"></div>
<div class="t" style="left:1645.20px;top:359.96px;font-size:16px;color:#d2d2d2;letter-spacing:0.250px;">0.5</div>
<div class="t" style="left:1725.50px;top:359.96px;font-size:16px;color:#c4c4c4;letter-spacing:0.000px;">Y</div>
<div class="a" style="left:1738px;top:356.4px;width:79.70000000000005px;height:21.600000000000023px;background:#2a2a2a;border-radius:3px"></div>
<div class="t" style="left:1742.00px;top:359.96px;font-size:16px;color:#d2d2d2;letter-spacing:0.250px;">0.5</div>
<div class="t" style="left:1462.40px;top:394.96px;font-size:16px;color:#c4c4c4;letter-spacing:0.251px;">Rotation</div>
<div class="t" style="left:1462.40px;top:419.96px;font-size:16px;color:#c4c4c4;letter-spacing:-0.206px;">Scale</div>
<svg class="a" style="left:1604px;top:420px;" width="17" height="14" viewBox="0 0 17 14"><g fill="none" stroke="#c4c4c4" stroke-width="1.4"><path d="M6 3 H4.5 Q1 3 1 7 Q1 11 4.5 11 H6 M11 3 H12.5 Q16 3 16 7 Q16 11 12.5 11 H11"/><path d="M3 1 L14 13"/></g></svg>
<div class="t" style="left:1632.00px;top:395.36px;font-size:16px;color:#c4c4c4;letter-spacing:0.000px;">X</div>
<div class="a" style="left:1650px;top:391.5px;width:71px;height:21.5px;background:#2a2a2a;border-radius:3px"></div>
<div class="t" style="left:1653.50px;top:395.36px;font-size:16px;color:#d2d2d2;letter-spacing:0.000px;">0</div>
<div class="t" style="left:1729.00px;top:395.36px;font-size:16px;color:#c4c4c4;letter-spacing:0.000px;">Y</div>
<div class="a" style="left:1746.7px;top:391.5px;width:71.0px;height:21.5px;background:#2a2a2a;border-radius:3px"></div>
<div class="t" style="left:1750.40px;top:395.36px;font-size:16px;color:#d2d2d2;letter-spacing:0.000px;">0</div>
<div class="t" style="left:1825.00px;top:395.36px;font-size:16px;color:#c4c4c4;letter-spacing:0.000px;">Z</div>
<div class="a" style="left:1843.5px;top:391.5px;width:71.09999999999991px;height:21.5px;background:#2a2a2a;border-radius:3px"></div>
<div class="t" style="left:1846.30px;top:395.36px;font-size:16px;color:#d2d2d2;letter-spacing:0.000px;">0</div>
<div class="t" style="left:1632.00px;top:420.56px;font-size:16px;color:#c4c4c4;letter-spacing:0.000px;">X</div>
<div class="a" style="left:1650px;top:416.7px;width:71px;height:21.5px;background:#2a2a2a;border-radius:3px"></div>
<div class="t" style="left:1653.50px;top:420.56px;font-size:16px;color:#d2d2d2;letter-spacing:0.000px;">1</div>
<div class="t" style="left:1729.00px;top:420.56px;font-size:16px;color:#c4c4c4;letter-spacing:0.000px;">Y</div>
<div class="a" style="left:1746.7px;top:416.7px;width:71.0px;height:21.5px;background:#2a2a2a;border-radius:3px"></div>
<div class="t" style="left:1750.40px;top:420.56px;font-size:16px;color:#d2d2d2;letter-spacing:0.000px;">1</div>
<div class="t" style="left:1825.00px;top:420.56px;font-size:16px;color:#c4c4c4;letter-spacing:0.000px;">Z</div>
<div class="a" style="left:1843.5px;top:416.7px;width:71.09999999999991px;height:21.5px;background:#2a2a2a;border-radius:3px"></div>
<div class="t" style="left:1846.30px;top:420.56px;font-size:16px;color:#d2d2d2;letter-spacing:0.000px;">1</div>
<div class="a" style="left:1438px;top:451px;width:481px;height:1px;background:#262626;"></div>
<div class="a" style="left:1535.6px;top:463.3px;width:285.4px;height:27.4px;background:#585858;border-radius:3px"></div>
<div class="t" style="left:1621.00px;top:469.96px;font-size:16px;color:#dadada;letter-spacing:0.005px;">Add Component</div>
<div class="a" style="left:1438px;top:1072px;width:481px;height:1px;background:#262626;"></div>
<div class="a" style="left:1438px;top:1073px;width:481px;height:31px;background:#3c3c3c;"></div>
<div class="a" style="left:1438px;top:1104px;width:481px;height:1px;background:#262626;"></div>
<div class="t" style="left:1443.00px;top:1080.96px;font-size:16px;color:#c8c8c8;letter-spacing:-0.393px;font-weight:700;">Asset Labels</div>
<div class="a" style="left:0px;top:1112px;width:1919px;height:26px;background:#161616;"></div>
<svg class="a" style="left:4px;top:1117px;" width="16" height="17" viewBox="0 0 16 17"><circle cx="8" cy="8" r="7.8" fill="#d8d8d8"/><path d="M2 13 L0.5 16.5 L5 14.5 Z" fill="#d8d8d8"/><rect x="6.8" y="3" width="2.4" height="6.5" fill="#161616"/><rect x="6.8" y="11" width="2.4" height="2.4" fill="#161616"/></svg>
<div class="t" style="left:25.00px;top:1118.96px;font-size:16px;color:#c8c8c8;letter-spacing:-0.089px;">[TMP Essential Resources] have been imported.</div>
<div class="a" style="left:1820px;top:1114px;width:1px;height:24px;background:#2c2c2c;"></div>
<div class="a" style="left:1853px;top:1114px;width:1px;height:24px;background:#2c2c2c;"></div>
<div class="a" style="left:1885px;top:1114px;width:1px;height:24px;background:#2c2c2c;"></div>
<svg class="a" style="left:1827px;top:1118px;" width="18" height="18" viewBox="0 0 18 18"><path d="M9 3 Q6 3 5.5 6 L3 4.5 L2.5 5.5 L5 7.3 Q4.6 8.5 4.7 9.6 L1.5 9.6 V10.8 L4.8 10.8 Q5 12.6 5.6 13.6 L2.5 15.6 L3.2 16.6 L6.3 14.8 Q7.6 16.6 9 16.8 Q10.4 16.6 11.7 14.8 L14.8 16.6 L15.5 15.6 L12.4 13.6 Q13 12.6 13.2 10.8 L16.5 10.8 V9.6 L13.3 9.6 Q13.4 8.5 13 7.3 L15.5 5.5 L15 4.5 L12.5 6 Q12 3 9 3 Z" fill="#c8c8c8"/><path d="M1 1 L17 17" stroke="#161616" stroke-width="3"/><path d="M1 1 L17 17" stroke="#c8c8c8" stroke-width="1.3"/></svg>
<svg class="a" style="left:1861px;top:1118px;" width="18" height="18" viewBox="0 0 18 18"><g fill="#c8c8c8"><ellipse cx="8" cy="3.5" rx="6.5" ry="2.5"/><path d="M1.5 5.5 Q8 9 14.5 5.5 V8 Q8 11.5 1.5 8 Z M1.5 10 Q8 13.5 14.5 10 V12.5 Q8 16 1.5 12.5 Z"/></g><path d="M9 10 L17 17" stroke="#161616" stroke-width="3"/><path d="M10 11 L17 17" stroke="#c8c8c8" stroke-width="1.3"/></svg>
<svg class="a" style="left:1893px;top:1118px;" width="17" height="17" viewBox="0 0 17 17"><circle cx="8.5" cy="8.5" r="7.6" fill="none" stroke="#c8c8c8" stroke-width="1.4"/><path d="M4.8 8.7 L7.5 11.3 L12.4 6" fill="none" stroke="#c8c8c8" stroke-width="1.5"/></svg>
<svg class="a" style="left:0;top:0" width="1919" height="1138"><path d="M879.0 461.4 L977.2 303.7" stroke="#f4f4f4" stroke-width="1.5"/><path d="M983.0 294.4 L980.8 306.0 L973.6 301.5 Z" fill="#f4f4f4"/><path d="M1351.0 474.0 L1458.7 319.7" stroke="#f4f4f4" stroke-width="1.5"/><path d="M1465.0 310.7 L1462.1 322.1 L1455.3 317.3 Z" fill="#f4f4f4"/><path d="M1546.3 363.4 L1625.4 280.7" stroke="#f4f4f4" stroke-width="1.5"/><path d="M1633.0 272.7 L1628.4 283.6 L1622.4 277.7 Z" fill="#f4f4f4"/><path d="M1552.0 408.8 L1620.0 332.2" stroke="#f4f4f4" stroke-width="1.5"/><path d="M1627.3 324.0 L1623.1 335.0 L1616.9 329.4 Z" fill="#f4f4f4"/><path d="M1887.8 383.5 L1767.2 283.5" stroke="#f4f4f4" stroke-width="1.5"/><path d="M1758.7 276.5 L1769.8 280.3 L1764.5 286.8 Z" fill="#f4f4f4"/><path d="M1797.8 404.7 L1752.5 331.9" stroke="#f4f4f4" stroke-width="1.5"/><path d="M1746.7 322.6 L1756.1 329.7 L1748.9 334.2 Z" fill="#f4f4f4"/><path d="M1925.0 408.0 L1858.3 292.1" stroke="#f4f4f4" stroke-width="1.5"/><path d="M1852.8 282.6 L1861.9 290.0 L1854.6 294.2 Z" fill="#f4f4f4"/></svg>
</body></html>
